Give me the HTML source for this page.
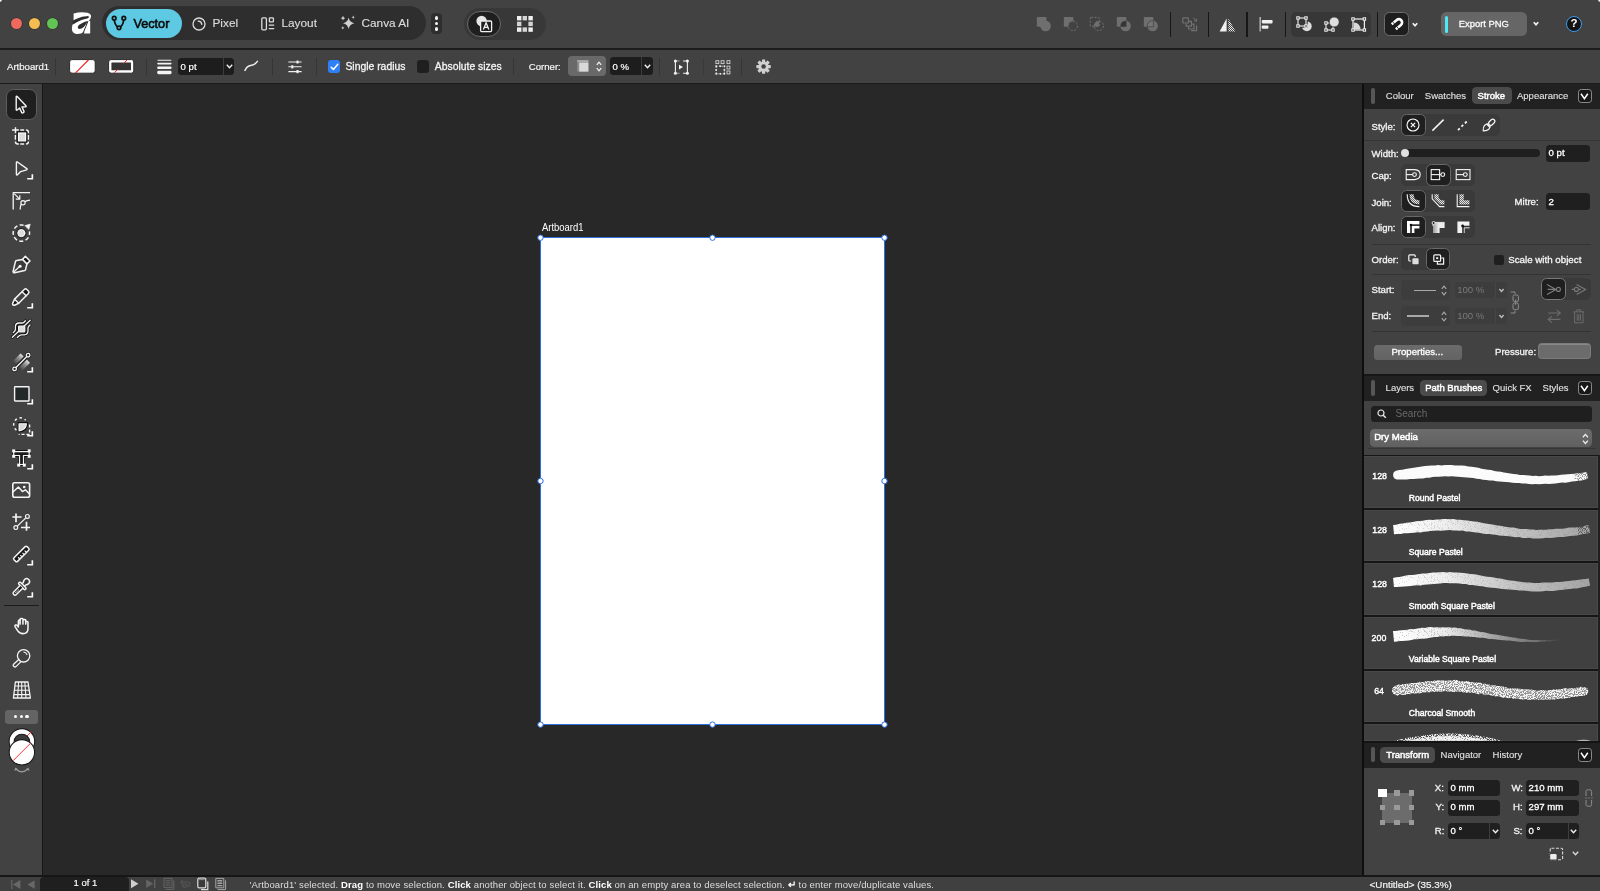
<!DOCTYPE html>
<html><head><meta charset="utf-8">
<style>
*{box-sizing:border-box;margin:0;padding:0}
html,body{width:1600px;height:891px;overflow:hidden;background:#282828}
body{font-family:"Liberation Sans",sans-serif;font-size:9.5px;color:#f2f2f2;position:relative;-webkit-font-smoothing:antialiased}
.abs{position:absolute}
#titlebar{position:absolute;left:0;top:0;width:1600px;height:49px;background:#424242}
#tbline{position:absolute;left:0;top:48px;width:1600px;height:2px;background:#1d1d1d}
#ctx{position:absolute;left:0;top:50px;width:1600px;height:33px;background:#424242}
#ctxline{position:absolute;left:0;top:83px;width:1600px;height:1px;background:#1b1b1b}
#tools{position:absolute;left:0;top:84px;width:42px;height:791px;background:#424242}
#toolsline{position:absolute;left:42px;top:84px;width:1px;height:791px;background:#161616}
#right{position:absolute;left:1364px;top:84px;width:236px;height:793px;background:#424242}
#rightline{position:absolute;left:1362.4px;top:84px;width:1.6px;height:807px;background:#0e0e0e}
#status{position:absolute;left:0;top:876.5px;width:1600px;height:14.5px;background:#404040}
#statusline{position:absolute;left:0;top:875px;width:1600px;height:1.5px;background:#161616}
.t{position:absolute;white-space:nowrap;line-height:1}
svg{position:absolute;overflow:visible}
#wrap{position:absolute;left:0;top:0;width:1600px;height:891px;will-change:transform}
</style></head><body><div id="wrap">
<div id="titlebar"></div><div id="tbline"></div>
<div id="ctx"></div><div id="ctxline"></div>
<div id="tools"></div><div id="toolsline"></div>
<div id="right"></div><div id="rightline"></div>
<div id="status"></div><div id="statusline"></div>
<!--TITLEBAR-->
<div class="abs" style="left:0;top:0;width:3px;height:3px;background:radial-gradient(circle at 0 0,#fff 0,#fff 1px,rgba(255,255,255,0) 2.4px)"></div><div class="abs" style="left:1597px;top:0;width:3px;height:3px;background:radial-gradient(circle at 100% 0,#fff 0,#fff 1px,rgba(255,255,255,0) 2.4px)"></div>
<!-- traffic lights -->
<div class="abs" style="left:11.4px;top:17.6px;width:11px;height:11px;border-radius:50%;background:#ee6a5e;box-shadow:0 0 0 .6px #2c2c2c"></div>
<div class="abs" style="left:29.2px;top:17.6px;width:11px;height:11px;border-radius:50%;background:#f5bd4f;box-shadow:0 0 0 .6px #2c2c2c"></div>
<div class="abs" style="left:47px;top:17.6px;width:11px;height:11px;border-radius:50%;background:#61c454;box-shadow:0 0 0 .6px #2c2c2c"></div>
<!-- logo -->
<svg style="left:66px;top:6px" width="32" height="34" viewBox="0 0 32 34"><path d="M7.6 7.5 Q15 5.4 21.5 6.8 Q25.6 8 25 11 Q24.6 13 22.8 14.9 L24.2 14.9 L24.2 27.5 L17.9 27.5 L18.5 25.5 Q14.5 28.5 10.4 28 Q5.4 27 5.9 21.4 Q6.6 16.6 10 14.4 L7.6 14.6 Z" fill="#fff"/><path d="M6.4 15.4 Q8 13.8 10 12.9 Q16 10.1 22.4 9.9 Q23.6 11 22 12.3 Q15 13.7 10.2 16.4 Q8.6 17.4 7.4 18.4 Z" fill="#2e2e2e"/><path d="M21.9 14.9 Q15.6 16.3 12.3 19.8 Q10.9 22.5 13.4 23 Q17.9 22.8 21.9 14.9 Z" fill="#2e2e2e"/><path d="M22 15.2 L17.2 26.9" stroke="#2e2e2e" stroke-width="1" fill="none"/></svg>
<!-- persona segment -->
<div class="abs" style="left:102px;top:6px;width:324px;height:34px;border-radius:17px;background:#2e2e2e"></div>
<div class="abs" style="left:105.5px;top:9px;width:76px;height:28.5px;border-radius:14.5px;background:#5ec9e2"></div>
<svg style="left:111px;top:15px" width="16" height="16" viewBox="0 0 16 16" fill="none" stroke="#111" stroke-width="1.7"><path d="M3.2 4.6 Q4 10.5 7.2 12.2 M12.8 4.6 Q12 10.5 8.8 12.2"/><circle cx="3.2" cy="3.2" r="1.8"/><circle cx="12.8" cy="3.2" r="1.8"/><circle cx="8" cy="12.8" r="1.8"/></svg>
<div class="t" style="left:133.4px;top:17.6px;font-size:12.7px;color:#0d0d0d;-webkit-text-stroke:.6px #0d0d0d">Vector</div>
<svg style="left:192px;top:16.5px" width="14" height="14" viewBox="0 0 14 14" fill="none" stroke="#dcdcdc" stroke-width="1.3"><circle cx="7" cy="7" r="6"/><path d="M6.2 4.2 Q9.4 4 9.8 7.4" stroke-linecap="round"/></svg>
<div class="t" style="left:212.5px;top:17.9px;font-size:11.8px;color:#dcdcdc;-webkit-text-stroke:.15px #dcdcdc">Pixel</div>
<svg style="left:261px;top:16.5px" width="14" height="14" viewBox="0 0 14 14" fill="none" stroke="#dcdcdc" stroke-width="1.3"><rect x=".8" y=".8" width="4.6" height="12" rx="1"/><rect x="8.4" y=".8" width="4" height="4" rx=".6"/><path d="M7.8 8.2 H13.2 M7.8 11.6 H13.2"/></svg>
<div class="t" style="left:281.5px;top:17.9px;font-size:11.8px;color:#dcdcdc;-webkit-text-stroke:.15px #dcdcdc">Layout</div>
<svg style="left:340px;top:15px" width="16" height="16" viewBox="0 0 16 16" fill="#cfcfcf"><path d="M8.6 2.6 Q9.4 7.2 14.4 8.2 Q9.4 9.2 8.6 14 Q7.8 9.2 3 8.2 Q7.8 7.2 8.6 2.6 Z"/><path d="M3 0.8 Q3.3 2.8 5.2 3.2 Q3.3 3.6 3 5.6 Q2.7 3.6 .8 3.2 Q2.7 2.8 3 .8 Z"/><path d="M13.2 .6 Q13.4 2 14.8 2.3 Q13.4 2.6 13.2 4 Q13 2.6 11.6 2.3 Q13 2 13.2 .6 Z"/><path d="M2.8 11.2 Q3 12.6 4.4 12.9 Q3 13.2 2.8 14.6 Q2.6 13.2 1.2 12.9 Q2.6 12.6 2.8 11.2 Z"/></svg>
<div class="t" style="left:361.5px;top:17.9px;font-size:11.8px;color:#dcdcdc;-webkit-text-stroke:.15px #dcdcdc">Canva AI</div>
<!-- more -->
<div class="abs" style="left:431px;top:13px;width:11px;height:20.5px;border-radius:4px;background:#2e2e2e"></div>
<div class="abs" style="left:434.7px;top:16px;width:3.8px;height:3.8px;border-radius:50%;background:#f4f4f4"></div>
<div class="abs" style="left:434.7px;top:21.5px;width:3.8px;height:3.8px;border-radius:50%;background:#f4f4f4"></div>
<div class="abs" style="left:434.7px;top:27px;width:3.8px;height:3.8px;border-radius:50%;background:#f4f4f4"></div>
<!-- view group -->
<div class="abs" style="left:464px;top:8px;width:82px;height:32px;border-radius:16px;background:#383838"></div>
<div class="abs" style="left:467px;top:11px;width:34px;height:26px;border-radius:13px;background:#1f1f1f;border:1px solid #6a6a6a"></div>
<svg style="left:475px;top:15px" width="18" height="18" viewBox="0 0 18 18"><circle cx="6.6" cy="6" r="5.2" fill="#e6e6e6"/><rect x="5.6" y="6" width="11" height="10.6" rx="1" fill="#1f1f1f" stroke="#f2f2f2" stroke-width="1.3"/><path d="M8.4 14.4 L11.1 7.8 L13.8 14.4 M9.3 12.4 H12.9" fill="none" stroke="#f2f2f2" stroke-width="1.3"/></svg>
<svg style="left:516.5px;top:15.5px" width="16" height="16" viewBox="0 0 16 16" fill="#f0f0f0"><rect x="0" y="0" width="4.4" height="4.4"/><rect x="5.6" y="0" width="4.4" height="4.4" opacity=".85"/><rect x="11.4" y="0" width="4.4" height="4.4"/><rect x="0" y="5.7" width="4.4" height="4.4" opacity=".85"/><rect x="11.4" y="5.7" width="4.4" height="4.4" opacity=".85"/><rect x="0" y="11.4" width="4.4" height="4.4"/><rect x="5.6" y="11.4" width="4.4" height="4.4" opacity=".85"/><rect x="11.4" y="11.4" width="4.4" height="4.4"/></svg>
<!-- boolean ops (disabled) -->
<svg style="left:1036px;top:16px" width="16" height="16" viewBox="0 0 16 16"><rect x=".8" y="1" width="9.6" height="9.8" rx=".8" fill="#6f6f6f"/><circle cx="9.6" cy="9.9" r="5.3" fill="#6f6f6f"/></svg>
<svg style="left:1062.6px;top:16px" width="16" height="16" viewBox="0 0 16 16"><rect x=".8" y="1" width="9.6" height="9.8" rx=".8" fill="#6f6f6f"/><circle cx="9.8" cy="9.9" r="4.7" fill="#424242" stroke="#6f6f6f" stroke-width="1" stroke-dasharray="2.2 1.4"/></svg>
<svg style="left:1089.4px;top:16px" width="16" height="16" viewBox="0 0 16 16"><rect x="1.2" y="1.4" width="9" height="9" rx=".6" fill="none" stroke="#6f6f6f" stroke-width="1" stroke-dasharray="2.2 1.4"/><circle cx="9.8" cy="9.9" r="4.7" fill="none" stroke="#6f6f6f" stroke-width="1" stroke-dasharray="2.2 1.4"/><path d="M10.2 5.2 A4.7 4.7 0 0 0 5.1 10.4 L10.2 10.4 Z" fill="#6f6f6f"/></svg>
<svg style="left:1116.2px;top:16px" width="16" height="16" viewBox="0 0 16 16"><rect x=".8" y="1" width="9.6" height="9.8" rx=".8" fill="#6f6f6f"/><circle cx="9.6" cy="9.9" r="5.3" fill="#6f6f6f"/><path d="M10.4 4.7 A5.3 5.3 0 0 0 4.4 10.8 L10.4 10.8 Z" fill="#363636"/></svg>
<svg style="left:1143px;top:16px" width="16" height="16" viewBox="0 0 16 16"><rect x=".8" y="1" width="9.6" height="9.8" rx=".8" fill="#6f6f6f"/><circle cx="9.6" cy="9.9" r="5.3" fill="#6f6f6f"/><path d="M10.4 4.7 A5.3 5.3 0 0 0 4.4 10.8 L10.4 10.8 Z" fill="#767676" stroke="#4a4a4a" stroke-width=".9"/></svg>
<div class="abs" style="left:1169.5px;top:11.5px;width:1.6px;height:25px;background:#161616"></div>
<!-- divide -->
<svg style="left:1181.5px;top:16.5px" width="16" height="15" viewBox="0 0 16 15" fill="none" stroke="#707070" stroke-width="1.2"><rect x=".8" y=".8" width="5.6" height="5.2" rx=".6"/><path d="M4.2 6.4 V9.2 H9.4 V4.4 H6.8"/><path d="M6.6 10 V12 H12 V7.2 H9.8"/><path d="M9 13.6 H14.6 V8.6"/><path d="M11 .8 L14.4 3.8 M14.6 1.6 V4 H12.2" stroke-width="1"/></svg>
<div class="abs" style="left:1207.7px;top:11.5px;width:1.6px;height:25px;background:#161616"></div>
<!-- flip -->
<svg style="left:1219px;top:17.5px" width="18" height="15" viewBox="0 0 18 15"><defs><pattern id="dots" width="2" height="2" patternUnits="userSpaceOnUse"><rect width="1" height="1" fill="#eee"/><rect x="1" y="1" width="1" height="1" fill="#eee"/></pattern></defs><path d="M7.6 .6 L7.6 13.6 L.6 13.6 Z" fill="#f0f0f0"/><path d="M9.4 .6 L9.4 13.6 L16.6 13.6 Z" fill="url(#dots)"/></svg>
<div class="abs" style="left:1246px;top:11.5px;width:1.6px;height:25px;background:#161616"></div>
<!-- align -->
<svg style="left:1259px;top:17px" width="15" height="15" viewBox="0 0 15 15"><rect x=".6" y="0" width="1.1" height="14.4" fill="#dcdcdc"/><rect x="2.8" y="3" width="10.8" height="3.4" rx=".8" fill="#f0f0f0"/><rect x="2.8" y="8.4" width="6.6" height="3.4" rx=".8" fill="#f0f0f0"/></svg>
<div class="abs" style="left:1284.7px;top:11.5px;width:1.6px;height:25px;background:#161616"></div>
<!-- group -->
<div class="abs" style="left:1291px;top:12px;width:80px;height:24.5px;border-radius:5px;background:#373737"></div>
<svg style="left:1296px;top:16px" width="18" height="16" viewBox="0 0 18 16"><circle cx="10.8" cy="10.3" r="4.9" fill="#dedede"/><rect x="2" y="2" width="8" height="8" fill="#373737" stroke="#373737" stroke-width="3.4"/><rect x="2" y="2" width="8" height="8" fill="none" stroke="#f2f2f2" stroke-width="1.1"/><g fill="#373737" stroke="#f2f2f2" stroke-width="1"><rect x=".8" y=".8" width="2.4" height="2.4"/><rect x="8.8" y=".8" width="2.4" height="2.4"/><rect x=".8" y="8.8" width="2.4" height="2.4"/><rect x="8.8" y="8.8" width="2.4" height="2.4"/></g></svg>
<svg style="left:1323.5px;top:16px" width="18" height="16" viewBox="0 0 18 16"><rect x="2" y="7" width="7" height="7" fill="none" stroke="#f2f2f2" stroke-width="1.1"/><circle cx="10.2" cy="6" r="5" fill="#dedede" stroke="#373737" stroke-width=".8"/><g fill="#373737" stroke="#f2f2f2" stroke-width="1"><rect x=".8" y="5.8" width="2.4" height="2.4"/><rect x=".8" y="12.8" width="2.4" height="2.4"/><rect x="7.8" y="12.8" width="2.4" height="2.4"/></g></svg>
<svg style="left:1351px;top:17px" width="16" height="15" viewBox="0 0 16 15"><rect x="2" y="2" width="11.4" height="11" fill="none" stroke="#f2f2f2" stroke-width="1.2"/><path d="M3 12.4 L3 5.4 Q9 5.8 9.6 12.4 Z" fill="#d8d8d8"/><g fill="#373737" stroke="#f2f2f2" stroke-width="1"><rect x=".8" y=".8" width="2.4" height="2.4"/><rect x="12.2" y=".8" width="2.4" height="2.4"/><rect x=".8" y="11.8" width="2.4" height="2.4"/><rect x="12.2" y="11.8" width="2.4" height="2.4"/></g></svg>
<div class="abs" style="left:1376.7px;top:11.5px;width:1.6px;height:25px;background:#161616"></div>
<!-- magnet -->
<div class="abs" style="left:1383.5px;top:12px;width:25.5px;height:24px;border-radius:5.5px;background:#1e1e1e;border:1.2px solid #6c6c6c"></div>
<svg style="left:1383px;top:12px" width="27" height="25" viewBox="0 0 27 25" fill="none"><g transform="translate(15.85 10.4) rotate(50)"><path d="M-3.25 6.6 V0 A3.25 3.25 0 0 1 3.25 0 V6.6" stroke="#fff" stroke-width="2.6"/><path d="M-5 4.3 H-1.5 M1.5 4.3 H5" stroke="#1e1e1e" stroke-width=".8"/></g></svg>
<svg style="left:1411.2px;top:21.6px" width="8" height="6" viewBox="0 0 8 6" fill="none" stroke="#f4f4f4" stroke-width="1.7"><path d="M1.8 1.2 L4 3.8 L6.2 1.2"/></svg>
<!-- export -->
<div class="abs" style="left:1441px;top:12px;width:86px;height:24px;border-radius:5.5px;background:#666"></div>
<div class="abs" style="left:1444.5px;top:15.5px;width:3.5px;height:17px;border-radius:2px;background:#4ee8f6"></div>
<div class="t" style="left:1458.8px;top:19.3px;font-size:9.4px;color:#fafafa;-webkit-text-stroke:.3px #fafafa">Export PNG</div>
<svg style="left:1531.6px;top:21.4px" width="8" height="6" viewBox="0 0 8 6" fill="none" stroke="#f4f4f4" stroke-width="1.7"><path d="M1.8 1.2 L4 3.8 L6.2 1.2"/></svg>
<!-- help -->
<div class="abs" style="left:1566px;top:16px;width:16.4px;height:16.4px;border-radius:50%;background:#141414;border:1.4px solid #3c9cf5"></div>
<div class="t" style="left:1570.6px;top:18.4px;font-size:11.5px;font-weight:bold;color:#fff">?</div>
<!--/TITLEBAR-->
<!--CTX-->
<div class="t" style="left:7px;top:61.8px;font-size:9.6px;color:#f4f4f4;-webkit-text-stroke:.2px #f4f4f4">Artboard1</div>
<div class="abs" style="left:55px;top:58px;width:1px;height:17px;background:#353535"></div>
<!-- fill swatch -->
<svg style="left:68.5px;top:58.5px" width="27" height="15" viewBox="0 0 27 15"><rect x=".6" y=".6" width="25.6" height="13.6" rx="2.4" fill="#fff" stroke="#2a2a2a" stroke-width="1"/><path d="M6.6 13.8 L19.4 1" stroke="#f21d1d" stroke-width="1.1"/></svg>
<!-- stroke swatch -->
<svg style="left:108px;top:58.5px" width="27" height="15" viewBox="0 0 27 15"><rect x=".6" y=".6" width="25.2" height="13.6" rx="2.4" fill="#fff" stroke="#2a2a2a" stroke-width="1"/><rect x="3.4" y="3.5" width="19.6" height="7.8" rx=".6" fill="#353535"/><path d="M6.4 13.8 L19 1" stroke="#f21d1d" stroke-width="1"/><rect x="4.6" y="4.6" width="17.2" height="5.6" fill="#353535"/></svg>
<div class="abs" style="left:145.5px;top:58px;width:1px;height:17px;background:#353535"></div>
<!-- line weight -->
<svg style="left:157px;top:59px" width="15" height="16" viewBox="0 0 15 16" fill="#f4f4f4"><rect x=".4" y=".8" width="14" height=".9" rx=".4"/><rect x=".2" y="3.7" width="14.4" height="1.7" rx=".8"/><rect x=".2" y="7.4" width="14.4" height="2.5" rx="1.2"/><rect x=".2" y="11.8" width="14.4" height="3.4" rx="1.4"/></svg>
<div class="abs" style="left:178px;top:58px;width:56px;height:17.4px;border-radius:3.5px;background:#1d1d1d"></div>
<div class="abs" style="left:223.2px;top:58px;width:1px;height:17.4px;background:#3d3d3d"></div>
<div class="t" style="left:180.6px;top:62px;font-size:9.6px;color:#fff;-webkit-text-stroke:.2px #fff">0 pt</div>
<svg style="left:225.6px;top:64.2px" width="7" height="5" viewBox="0 0 7 5" fill="none" stroke="#f0f0f0" stroke-width="1.4"><path d="M.8 .8 L3.5 3.8 L6.2 .8"/></svg>
<svg style="left:244px;top:60px" width="15" height="12" viewBox="0 0 15 12" fill="none" stroke="#f0f0f0" stroke-width="1.5" stroke-linecap="round"><path d="M1 10.4 Q3.2 6 6.6 5.6 Q10.6 5.2 13.4 1.4"/></svg>
<div class="abs" style="left:272px;top:58px;width:1px;height:17px;background:#353535"></div>
<!-- sliders -->
<svg style="left:287.5px;top:59.5px" width="14" height="14" viewBox="0 0 14 14" stroke="#f0f0f0" stroke-width="1.1" fill="#f0f0f0"><path d="M.4 2 H13.6 M.4 6.8 H13.6 M.4 11.6 H13.6"/><rect x="8.4" y=".4" width="2.2" height="3.2" rx=".6" stroke="none"/><rect x="3.2" y="5.2" width="2.2" height="3.2" rx=".6" stroke="none"/><rect x="8.4" y="10" width="2.2" height="3.2" rx=".6" stroke="none"/></svg>
<div class="abs" style="left:316.2px;top:58px;width:1px;height:17px;background:#353535"></div>
<!-- checkboxes -->
<div class="abs" style="left:327.6px;top:60px;width:12.8px;height:12.8px;border-radius:3px;background:#2f80f7"></div>
<svg style="left:329.6px;top:62.6px" width="9" height="8" viewBox="0 0 9 8" fill="none" stroke="#fff" stroke-width="1.5" stroke-linecap="round" stroke-linejoin="round"><path d="M1.2 4.2 L3.4 6.4 L7.8 1.2"/></svg>
<div class="t" style="left:345.4px;top:61.5px;font-size:10.4px;color:#f4f4f4;-webkit-text-stroke:.3px #f4f4f4">Single radius</div>
<div class="abs" style="left:417px;top:60.2px;width:12.4px;height:12.4px;border-radius:3px;background:#1f1f1f"></div>
<div class="t" style="left:434.8px;top:61.5px;font-size:10.4px;color:#f4f4f4;-webkit-text-stroke:.3px #f4f4f4">Absolute sizes</div>
<div class="abs" style="left:513px;top:58px;width:1px;height:17px;background:#353535"></div>
<div class="t" style="left:528.8px;top:62px;font-size:9.6px;color:#f4f4f4;-webkit-text-stroke:.2px #f4f4f4">Corner:</div>
<div class="abs" style="left:568px;top:56.2px;width:38px;height:20px;border-radius:4px;background:#696969"></div>
<svg style="left:576.5px;top:60px" width="12" height="12" viewBox="0 0 12 12"><rect x=".2" y=".4" width="11.2" height="11.2" fill="#8c8c8c"/><rect x="2.2" y="2.6" width="9.2" height="9" fill="#d9d9d9"/><path d="M.2 1 H11.4" stroke="#cfcfcf" stroke-width="1"/></svg>
<svg style="left:595.6px;top:60.6px" width="6" height="11" viewBox="0 0 6 11" fill="none" stroke="#f0f0f0" stroke-width="1.3"><path d="M.8 3.8 L3 1.2 L5.2 3.8 M.8 7.2 L3 9.8 L5.2 7.2"/></svg>
<div class="abs" style="left:610px;top:57.4px;width:43.4px;height:18px;border-radius:3.5px;background:#1d1d1d"></div>
<div class="abs" style="left:641.2px;top:57.4px;width:1px;height:18px;background:#3d3d3d"></div>
<div class="t" style="left:612.6px;top:62px;font-size:9.6px;color:#fff;-webkit-text-stroke:.2px #fff">0 %</div>
<svg style="left:644.4px;top:64.2px" width="7" height="5" viewBox="0 0 7 5" fill="none" stroke="#f0f0f0" stroke-width="1.4"><path d="M.8 .8 L3.5 3.8 L6.2 .8"/></svg>
<div class="abs" style="left:659px;top:58px;width:1px;height:17px;background:#353535"></div>
<!-- icon 1 -->
<svg style="left:673px;top:59px" width="17" height="16" viewBox="0 0 17 16" fill="none" stroke="#f0f0f0" stroke-width="1.1"><path d="M2.4 2 V14 M14.4 2 V14"/><path d="M10 2 H14.4 M10 14.2 H14.4"/><path d="M2.4 2 H6.6 M2.4 14.2 H6.6" stroke="#a0a0a0"/><g fill="#f4f4f4" stroke="none"><circle cx="2.4" cy="1.9" r="1.5"/><circle cx="2.4" cy="14.2" r="1.5"/><circle cx="14.4" cy="1.9" r="1.5"/><circle cx="14.4" cy="14.2" r="1.5"/><path d="M6 5.8 L10 8.1 L6 10.4 Z"/></g></svg>
<div class="abs" style="left:703.4px;top:58px;width:1px;height:17px;background:#393939"></div>
<!-- icon 2 -->
<svg style="left:714.5px;top:59.5px" width="16" height="15" viewBox="0 0 16 15" fill="none" stroke="#d4d4d4" stroke-width=".9"><rect x=".9" y=".7" width="2.9" height="2.9"/><rect x="6.1" y=".7" width="2.9" height="2.9"/><rect x="12" y=".7" width="2.9" height="2.9"/><rect x="12" y="6.1" width="2.9" height="2.9"/><rect x="12" y="11" width="2.9" height="2.9"/><rect x="1.2" y="6.2" width="8.2" height="7.6" stroke-dasharray="1.4 1.3"/><g fill="#f0f0f0" stroke="none"><rect x=".4" y="5.4" width="1.6" height="1.6"/><rect x="8.6" y="5.4" width="1.6" height="1.6"/><rect x=".4" y="13" width="1.6" height="1.6"/><rect x="8.6" y="13" width="1.6" height="1.6"/><rect x="4.5" y="5.4" width="1.6" height="1.6"/><rect x="4.5" y="13" width="1.6" height="1.6"/><rect x=".4" y="9.2" width="1.6" height="1.6"/><rect x="8.6" y="9.2" width="1.6" height="1.6"/></g></svg>
<div class="abs" style="left:741px;top:58px;width:1px;height:17px;background:#353535"></div>
<!-- gear -->
<svg style="left:755.6px;top:58.5px" width="15.2" height="15.2" viewBox="-8 -8 16 16"><g fill="#d0d0d0"><circle r="5.4"/><rect x="-1.7" y="-7.6" width="3.4" height="3.6" rx=".5" transform="rotate(0)"/><rect x="-1.7" y="-7.6" width="3.4" height="3.6" rx=".5" transform="rotate(45)"/><rect x="-1.7" y="-7.6" width="3.4" height="3.6" rx=".5" transform="rotate(90)"/><rect x="-1.7" y="-7.6" width="3.4" height="3.6" rx=".5" transform="rotate(135)"/><rect x="-1.7" y="-7.6" width="3.4" height="3.6" rx=".5" transform="rotate(180)"/><rect x="-1.7" y="-7.6" width="3.4" height="3.6" rx=".5" transform="rotate(225)"/><rect x="-1.7" y="-7.6" width="3.4" height="3.6" rx=".5" transform="rotate(270)"/><rect x="-1.7" y="-7.6" width="3.4" height="3.6" rx=".5" transform="rotate(315)"/></g><circle r="2.4" fill="#424242"/></svg>
<!--/CTX-->
<!--TOOLS-->
<div class="abs" style="left:6px;top:89.3px;width:31px;height:30.4px;border-radius:7.5px;background:#1f1f1f;border:1px solid #5e5e5e"></div>
<svg style="left:11px;top:94.5px" width="20" height="20" viewBox="0 0 20 20" fill="none" stroke="#f4f4f4" stroke-width="1.3" stroke-linejoin="round" stroke-linecap="round"><path d="M5.2 1.8 L5.2 14.6 Q5.4 15.6 6.3 15 L8.6 13 L10.6 17.4 Q11 18.2 11.8 17.9 L12.6 17.5 Q13.3 17.1 13 16.4 L11 12 L14.6 11.8 Q15.6 11.6 14.9 10.8 L6.2 1.5 Q5.3 .8 5.2 1.8 Z" stroke-width="1.4"/></svg>
<svg style="left:11px;top:126.0px" width="20" height="20" viewBox="0 0 20 20" fill="none" stroke="#f4f4f4" stroke-width="1.3" stroke-linejoin="round" stroke-linecap="round"><path d="M9.3 4 H13.1 M15.1 4 Q17.4 4 17.4 6.4 V7.2 M17.4 9 V13.7 M17.4 15.5 Q17.4 18 15.1 18 M13.1 18 H9.3 M7.8 18 H6.8 Q4.4 18 4.4 15.5 M4.4 13.7 V9" stroke-linecap="butt" stroke-width="1.4"/><rect x="6.9" y="6.4" width="8.3" height="9.1" fill="#111" stroke="#111" stroke-width="2.2"/><rect x="7.5" y="7" width="7.1" height="7.9" fill="#dcdcdc" stroke="#fafafa" stroke-width="1.2" stroke-linejoin="miter"/><path d="M1.1 4 H7.9 M4.5 1.2 V7.3" stroke-linecap="butt" stroke-width="1.4"/></svg>
<svg style="left:27px;top:174.20px" width="7" height="6" viewBox="0 0 7 6" fill="none" stroke="#fcfcfc" stroke-width="1.65"><path d="M5.35 .2 V4.75 H.2"/></svg>
<svg style="left:11px;top:159.3px" width="20" height="20" viewBox="0 0 20 20" fill="none" stroke="#f4f4f4" stroke-width="1.3" stroke-linejoin="round" stroke-linecap="round"><path d="M5.4 3.6 L5.4 15.4 Q5.6 16.5 6.5 15.8 L9.6 12.6 L15.6 10.8 Q16.8 10.3 15.8 9.6 L6.4 3 Q5.4 2.5 5.4 3.6 Z" stroke-width="1.4"/></svg>
<svg style="left:11px;top:190.9px" width="20" height="20" viewBox="0 0 20 20" fill="none" stroke="#f4f4f4" stroke-width="1.3" stroke-linejoin="round" stroke-linecap="round"><path d="M2.2 18.4 V1.6 H19" stroke-linecap="butt" stroke-width="1.3"/><path d="M3.2 2.6 L8.4 7.8 M8.8 4.2 V8.2 H4.8" stroke-width="1.2" stroke-linecap="butt"/><circle cx="12" cy="11.8" r="2.1" stroke-width="1.2"/><path d="M14 10.6 Q16 9.4 19 9.2 M10.2 13 Q9.2 15.4 9.2 18.6" stroke-width="1.3" stroke-linecap="butt"/></svg>
<svg style="left:11px;top:222.9px" width="20" height="20" viewBox="0 0 20 20" fill="none" stroke="#f4f4f4" stroke-width="1.3" stroke-linejoin="round" stroke-linecap="round"><circle cx="10.36" cy="10.1" r="3.9" fill="#222" stroke="#222" stroke-width="2.4"/><circle cx="10.36" cy="10.1" r="8.2" stroke-dasharray="4 2.44" stroke-dashoffset="2" stroke-linecap="butt" stroke-width="1.5"/><circle cx="16.3" cy="4.2" r="2.9" fill="#424242" stroke="none"/><circle cx="10.36" cy="10.1" r="3.6" fill="#dcdcdc" stroke="#fafafa" stroke-width="1"/><path d="M14 2.5 L19.3 1.1 L17.9 6.3 Z" fill="#fafafa" stroke="#fafafa" stroke-width=".5"/></svg>
<svg style="left:11px;top:255.1px" width="20" height="20" viewBox="0 0 20 20" fill="none" stroke="#f4f4f4" stroke-width="1.3" stroke-linejoin="round" stroke-linecap="round"><path d="M11.5 4.4 L14.3 1.3 L19 6 L15.9 8.9 Z" fill="#151515" stroke-width="1.5"/><path d="M2.6 17.2 Q1.8 17.4 2.2 16 L4.5 6.4 Q4.7 5.6 5.6 5.5 L11.5 4.4 L15.9 8.9 L14.6 14.6 Q14.4 15.4 13.6 15.6 L3.6 17.8 Q2.4 18 2.6 17.2 Z" fill="#3a3a3a" stroke-width="1.5"/><path d="M2.8 17 L8.6 11.6" stroke-width="1.3"/><circle cx="9.1" cy="11.2" r="1.5" fill="#fafafa" stroke="none"/></svg>
<svg style="left:27px;top:302.80px" width="7" height="6" viewBox="0 0 7 6" fill="none" stroke="#fcfcfc" stroke-width="1.65"><path d="M5.35 .2 V4.75 H.2"/></svg>
<svg style="left:11px;top:287.0px" width="20" height="20" viewBox="0 0 20 20" fill="none" stroke="#f4f4f4" stroke-width="1.3" stroke-linejoin="round" stroke-linecap="round"><g transform="translate(9.2 10.65) rotate(-45)"><path d="M5.6 -2.9 H8.7 Q10.5 -2.9 10.5 -1.1 V1.1 Q10.5 2.9 8.7 2.9 H5.6 Z" fill="#151515" stroke="none"/><path d="M-5 -2.9 L-9.4 -1.3 Q-11 0 -9.4 1.3 L-5 2.9 Z" fill="#151515" stroke="none"/><path d="M-5 -2.9 H8.7 Q10.5 -2.9 10.5 -1.1 V1.1 Q10.5 2.9 8.7 2.9 H-5 L-9.4 1.3 Q-11 0 -9.4 -1.3 Z" stroke-width="1.5"/><path d="M5.6 -2.9 V2.9 M-5 -2.9 V2.9" stroke-width="1.4"/></g></svg>
<svg style="left:11px;top:319.4px" width="20" height="20" viewBox="0 0 20 20" fill="none" stroke="#f4f4f4" stroke-width="1.3" stroke-linejoin="round" stroke-linecap="round"><path d="M2.2 13.6 L3.6 12.2 Q4.4 11.4 4.4 10 L4.4 7.4 Q4.6 4.2 8 4 L11 4 Q12.2 4 13 3.2 L14.4 1.8 M19 6 L17.8 7.2 Q17 8 17 9.4 L17 12 Q16.8 15.6 13.4 15.8 L10.6 15.8 Q9.4 15.8 8.6 16.6 L6.3 18.6" stroke="#111" stroke-width="2.8"/><path d="M1.4 18.3 L19.2 1.2" stroke="#111" stroke-width="2.8"/><rect x="7.4" y="6.8" width="6.6" height="6.4" rx="1" fill="#111" stroke="#111" stroke-width="2.6"/><path d="M2.2 13.6 L3.6 12.2 Q4.4 11.4 4.4 10 L4.4 7.4 Q4.6 4.2 8 4 L11 4 Q12.2 4 13 3.2 L14.4 1.8 M19 6 L17.8 7.2 Q17 8 17 9.4 L17 12 Q16.8 15.6 13.4 15.8 L10.6 15.8 Q9.4 15.8 8.6 16.6 L6.3 18.6" stroke-width="1.3"/><path d="M1.4 18.3 L19.2 1.2" stroke-width="1.3"/><rect x="7.6" y="7" width="6.2" height="6" rx=".8" fill="#dcdcdc" stroke-width="1.2"/></svg>
<svg style="left:27px;top:367.10px" width="7" height="6" viewBox="0 0 7 6" fill="none" stroke="#fcfcfc" stroke-width="1.65"><path d="M5.35 .2 V4.75 H.2"/></svg>
<svg style="left:11px;top:351.5px" width="20" height="20" viewBox="0 0 20 20" fill="none" stroke="#f4f4f4" stroke-width="1.3" stroke-linejoin="round" stroke-linecap="round"><defs><linearGradient id="gg" x1="0" y1="0" x2="1" y2="0"><stop offset="0" stop-color="#4c4c4c"/><stop offset=".55" stop-color="#8e8e8e"/><stop offset="1" stop-color="#e2e2e2"/></linearGradient></defs><g stroke="none"><rect x="-5.3" y="-2.2" width="10.6" height="4.4" rx=".5" fill="url(#gg)" transform="translate(7.4 6.7) rotate(-45)"/><rect x="-5.3" y="-2.2" width="10.6" height="4.4" rx=".5" fill="url(#gg)" transform="translate(13.65 13) rotate(-45)"/></g><path d="M3.6 16.9 L17.1 3.2" stroke="#1a1a1a" stroke-width="3.2"/><circle cx="3.6" cy="16.9" r="2" fill="#1a1a1a" stroke="#1a1a1a" stroke-width="2"/><circle cx="17.1" cy="3.2" r="2" fill="#1a1a1a" stroke="#1a1a1a" stroke-width="2"/><path d="M5 15.4 L15.6 4.7" stroke-width="1.4"/><circle cx="3.6" cy="16.9" r="1.8" fill="#1e1e1e" stroke-width="1.3"/><circle cx="17.1" cy="3.2" r="1.8" fill="#1e1e1e" stroke-width="1.3"/></svg>
<svg style="left:27px;top:399.25px" width="7" height="6" viewBox="0 0 7 6" fill="none" stroke="#fcfcfc" stroke-width="1.65"><path d="M5.35 .2 V4.75 H.2"/></svg>
<svg style="left:11px;top:383.5px" width="20" height="20" viewBox="0 0 20 20" fill="none" stroke="#f4f4f4" stroke-width="1.3" stroke-linejoin="round" stroke-linecap="round"><rect x="3.6" y="2.8" width="14.4" height="14.2" rx=".6" fill="#232929" stroke-width="1.4" stroke-linejoin="miter"/></svg>
<svg style="left:27px;top:431.40px" width="7" height="6" viewBox="0 0 7 6" fill="none" stroke="#fcfcfc" stroke-width="1.65"><path d="M5.35 .2 V4.75 H.2"/></svg>
<svg style="left:11px;top:415.7px" width="20" height="20" viewBox="0 0 20 20" fill="none" stroke="#f4f4f4" stroke-width="1.3" stroke-linejoin="round" stroke-linecap="round"><path d="M14.6 4.2 A6.8 6.8 0 1 0 7 15" stroke-dasharray="2.4 2.9" stroke-dashoffset="1" stroke-linecap="butt" stroke-width="1.5"/><path d="M18.6 7.4 V18.4 H7.6" stroke-dasharray="3.2 1.8" stroke-dashoffset="-1" stroke-linecap="butt" stroke-linejoin="miter" stroke-width="1.4"/><path d="M7.8 7.4 H15.9 Q15.6 14.6 7.8 15.2 Z" fill="#111" stroke="#111" stroke-width="2.6"/><path d="M8 7.8 H15.5 Q15 14.2 8 14.9 Z" fill="#d8d8d8" stroke-width="1.1"/></svg>
<svg style="left:27px;top:463.55px" width="7" height="6" viewBox="0 0 7 6" fill="none" stroke="#fcfcfc" stroke-width="1.65"><path d="M5.35 .2 V4.75 H.2"/></svg>
<svg style="left:11px;top:448.0px" width="20" height="20" viewBox="0 0 20 20" fill="none" stroke="#f4f4f4" stroke-width="1.3" stroke-linejoin="round" stroke-linecap="round"><path d="M2.7 3.6 H18.2 V7.5 H12.5 V16.5 H8.5 V7.5 H2.7 Z" stroke="#111" stroke-width="3" stroke-linejoin="miter"/><path d="M2.7 3.6 H18.2 V7.5 H12.5 V16.5 H8.5 V7.5 H2.7 Z" fill="#1c1c1c" stroke-width="1.2" stroke-linejoin="miter"/><g fill="#fafafa" stroke="none"><rect x="1.2" y="1.4" width="3" height="3"/><rect x="16.7" y="1.4" width="3" height="3"/><rect x="1.2" y="6.8" width="3" height="3"/><rect x="16.7" y="6.8" width="3" height="3"/><rect x="6.2" y="15.6" width="3" height="3"/><rect x="11.8" y="15.6" width="3" height="3"/></g></svg>
<svg style="left:11px;top:480.0px" width="20" height="20" viewBox="0 0 20 20" fill="none" stroke="#f4f4f4" stroke-width="1.3" stroke-linejoin="round" stroke-linecap="round"><rect x="1.8" y="2.8" width="16.8" height="14.4" rx="1.8" stroke-width="1.6"/><path d="M2.2 11.8 L7.4 7 L11.4 11.6 L14.4 9.8 L18.4 14" stroke-width="1.45"/><circle cx="13.2" cy="7" r="1.3" fill="#f4f4f4" stroke="none"/></svg>
<svg style="left:11px;top:512.2px" width="20" height="20" viewBox="0 0 20 20" fill="none" stroke="#f4f4f4" stroke-width="1.3" stroke-linejoin="round" stroke-linecap="round"><path d="M1.4 5 H10.6 M5 1.4 V10.2 M10 15.5 H19 M15.5 9.8 V18.8" stroke-width="1.7" stroke-linecap="butt"/><path d="M6 14.4 L15.2 5.6" stroke-width="1.3"/><circle cx="4.8" cy="15.6" r="1.9" fill="#424242" stroke-width="1.2"/><circle cx="16.4" cy="4.4" r="1.9" fill="#424242" stroke-width="1.2"/></svg>
<svg style="left:27px;top:560.00px" width="7" height="6" viewBox="0 0 7 6" fill="none" stroke="#fcfcfc" stroke-width="1.65"><path d="M5.35 .2 V4.75 H.2"/></svg>
<svg style="left:11px;top:544.3px" width="20" height="20" viewBox="0 0 20 20" fill="none" stroke="#f4f4f4" stroke-width="1.3" stroke-linejoin="round" stroke-linecap="round"><g transform="translate(10.35 10) rotate(-45)"><rect x="-9.2" y="-2.5" width="18.4" height="5" rx="1.3" fill="#161616" stroke-width="1.5"/><path d="M-4.6 2.5 V0 M-1.5 2.5 V0 M1.6 2.5 V0 M4.7 2.5 V0" stroke-width="1.2" stroke-linecap="butt"/></g></svg>
<svg style="left:27px;top:592.15px" width="7" height="6" viewBox="0 0 7 6" fill="none" stroke="#fcfcfc" stroke-width="1.65"><path d="M5.35 .2 V4.75 H.2"/></svg>
<svg style="left:11px;top:576.5px" width="20" height="20" viewBox="0 0 20 20" fill="none" stroke="#f4f4f4" stroke-width="1.3" stroke-linejoin="round" stroke-linecap="round"><g transform="translate(10.15 10.1) rotate(45)"><path d="M-1.7 -2.6 V-4.8 Q-2.9 -6 -2.9 -7.8 Q-2.9 -10.6 0 -10.6 Q2.9 -10.6 2.9 -7.8 Q2.9 -6 1.7 -4.8 V-2.6" fill="#3a3a3a" stroke-width="1.45"/><rect x="-4.7" y="-2.9" width="9.4" height="2.5" rx="1.25" fill="#424242" stroke-width="1.45"/><path d="M-1.9 -.4 V8.7 Q-1.9 10.6 0 10.6 Q1.9 10.6 1.9 8.7 V-.4" fill="#1c1c1c" stroke-width="1.45"/><path d="M0 3.6 V8.8" stroke-width="1.1" stroke-dasharray="1 .7" stroke-linecap="butt"/></g></svg>
<svg style="left:11px;top:615.7px" width="20" height="20" viewBox="0 0 20 20" fill="none" stroke="#f4f4f4" stroke-width="1.3" stroke-linejoin="round" stroke-linecap="round"><path d="M7.4 11 V4.9 Q7.4 4.2 8.25 4.2 Q9.1 4.2 9.1 4.9 V3.2 Q9.1 2.5 10.5 2.5 Q11.95 2.5 11.95 3.2 V4.3 Q11.95 3.6 13.35 3.6 Q14.75 3.6 14.75 4.3 V6.2 Q14.75 5.5 15.9 5.5 Q17 5.5 17 6.3 V12.4 Q17 17.6 11.8 17.6 Q8.6 17.6 6.6 14.6 L4.2 10.8 Q3.5 9.5 4.6 9 Q5.6 8.7 6.4 9.6 L7.4 11 M9.1 4.9 V8.1 M11.95 3.4 V8.1 M14.75 4.6 V8.1" stroke-width="1.55"/></svg>
<svg style="left:11px;top:647.8px" width="20" height="20" viewBox="0 0 20 20" fill="none" stroke="#f4f4f4" stroke-width="1.3" stroke-linejoin="round" stroke-linecap="round"><circle cx="12.6" cy="7.8" r="6.2" stroke-width="1.3"/><path d="M8 11.2 L2.6 16.2 Q1.6 17.2 2.6 18.2 L3 18.6 Q4 19.4 5 18.6 L10 13.6" stroke-width="1.3"/><path d="M12.8 4 Q15.2 4.4 16 6.6" stroke-width="1.1"/></svg>
<svg style="left:11px;top:679.7px" width="20" height="20" viewBox="0 0 20 20" fill="none" stroke="#f4f4f4" stroke-width="1.3" stroke-linejoin="round" stroke-linecap="round"><path d="M4.4 2 H17 L19.4 18 H2.4 Z" stroke-width="1.3"/><path d="M7.6 2 L6.6 18 M10.7 2 V18 M13.8 2 L15 18 M4 6 H17.6 M3.4 10.2 H18.2 M2.8 14.6 H18.8" stroke-width="1.1" stroke-linecap="butt"/></svg>
<div class="abs" style="left:4px;top:605px;width:35px;height:1.2px;background:#1b1b1b"></div>
<div class="abs" style="left:5px;top:709.6px;width:33px;height:14px;border-radius:3px;background:#646464"></div>
<div class="abs" style="left:14px;top:714.8px;width:3.4px;height:3.4px;border-radius:50%;background:#fafafa"></div>
<div class="abs" style="left:19.8px;top:714.8px;width:3.4px;height:3.4px;border-radius:50%;background:#fafafa"></div>
<div class="abs" style="left:25.4px;top:714.8px;width:3.4px;height:3.4px;border-radius:50%;background:#fafafa"></div>
<svg style="left:7px;top:726px" width="30" height="50" viewBox="0 0 30 50"><defs><linearGradient id="rg" x1="0" y1="0" x2="0" y2="1"><stop offset="0" stop-color="#fff"/><stop offset=".55" stop-color="#fff"/><stop offset="1" stop-color="#8a8a8a"/></linearGradient><clipPath id="rc"><circle cx="14.9" cy="15.4" r="12.6"/></clipPath></defs>
<circle cx="14.9" cy="15.4" r="12.8" fill="url(#rg)" stroke="#1a1a1a" stroke-width="1.1"/>
<path d="M20 10 L24.4 5.8" stroke="#f33" stroke-width="1"/>
<circle cx="14.9" cy="16" r="7.8" fill="#3c3c3c" stroke="#1a1a1a" stroke-width="1.1"/>
<circle cx="14.9" cy="26.3" r="12.7" fill="#fff" stroke="#1a1a1a" stroke-width="1.1"/>
<path d="M6.1 34.7 L23.6 17.2" stroke="#f33" stroke-width="1"/>
<g fill="none" stroke="#9c9c9c" stroke-width="1.1"><path d="M8.8 43 Q14.8 48.6 20.8 43"/><path d="M7.2 44.8 L8.4 41.6 L11.2 43.4 Z M22.6 44.8 L21.4 41.6 L18.6 43.4 Z" fill="#9c9c9c" stroke="none"/></g></svg>
<!--/TOOLS-->
<!--CANVAS-->
<div class="t" style="left:542.2px;top:221.9px;font-size:10.5px;color:#fff;transform:scaleX(.9);transform-origin:0 0">Artboard1</div>
<div class="abs" style="left:540px;top:237px;width:345px;height:488px;background:#fff;border:1px solid #2c6fe0"></div>
<svg style="left:0;top:0" width="1600" height="891" viewBox="0 0 1600 891"><g fill="#fff" stroke="#2f6fdf" stroke-width="1"><circle cx="540.5" cy="237.7" r="2.7"/><circle cx="712.5" cy="237.7" r="2.7"/><circle cx="884.5" cy="237.7" r="2.7"/><circle cx="540.5" cy="481" r="2.7"/><circle cx="884.5" cy="481" r="2.7"/><circle cx="540.5" cy="724.6" r="2.7"/><circle cx="712.5" cy="724.6" r="2.7"/><circle cx="884.5" cy="724.6" r="2.7"/></g></svg>
<!--/CANVAS-->
<!--RIGHT-->
<div class="abs" style="left:1364px;top:84px;width:236px;height:24.7px;background:#212121;border-radius:0px;"></div>
<div class="abs" style="left:1371.2px;top:88px;width:3.4px;height:15.6px;background:#565656;border-radius:1.7px;"></div>
<div class="t" style="left:1385.8px;top:90.76px;font-size:9.5px;color:#e2e2e2;-webkit-text-stroke:0.1px #e2e2e2;">Colour</div>
<div class="t" style="left:1424.8px;top:90.76px;font-size:9.5px;color:#e2e2e2;-webkit-text-stroke:0.1px #e2e2e2;">Swatches</div>
<div class="abs" style="left:1472.2px;top:87.4px;width:39.4px;height:16.8px;background:#4b4b4b;border-radius:4.5px;"></div>
<div class="t" style="left:1477.6px;top:90.76px;font-size:9.5px;color:#fff;-webkit-text-stroke:0.45px #fff;">Stroke</div>
<div class="t" style="left:1517px;top:90.76px;font-size:9.5px;color:#e2e2e2;-webkit-text-stroke:0.1px #e2e2e2;">Appearance</div>
<div class="abs" style="left:1577.6px;top:89.2px;width:14.2px;height:13.6px;background:#181818;border-radius:3.2px;border:1px solid #8a8a8a"></div>
<svg style="left:1580.4px;top:92.8px" width="9" height="7" viewBox="0 0 9 7" fill="none"><path d="M1 .8 L4.4 5.6 L7.8 .8" stroke="#fff" stroke-width="1.5"/></svg>
<div class="t" style="left:1371.5px;top:121.97px;font-size:9.6px;color:#f4f4f4;-webkit-text-stroke:0.3px #f4f4f4;">Style:</div>
<div class="abs" style="left:1401px;top:114px;width:99px;height:22px;background:#3a3a3a;border-radius:5.5px;"></div>
<div class="abs" style="left:1401px;top:114px;width:25px;height:22px;background:#1f1f1f;border-radius:5.5px;border:1px solid #686868"></div>
<svg style="left:1406px;top:118px" width="14" height="14" viewBox="0 0 14 14" fill="none"><circle cx="7" cy="7" r="6" stroke="#fff" stroke-width="1.1"/><path d="M4.9 4.9 L9.1 9.1 M9.1 4.9 L4.9 9.1" stroke="#fff" stroke-width="1.2"/></svg>
<svg style="left:1431px;top:118px" width="14" height="14" viewBox="0 0 14 14" fill="none"><path d="M1.4 12.6 L12.6 1.6" stroke="#f4f4f4" stroke-width="1.5"/></svg>
<svg style="left:1457px;top:119px" width="12" height="12" viewBox="0 0 12 12" fill="none"><path d="M1 11.2 L11.2 1" stroke="#f4f4f4" stroke-width="1.8" stroke-dasharray="2.5 2.4"/></svg>
<svg style="left:1481px;top:117.5px" width="15" height="15" viewBox="0 0 15 15" fill="none"><g transform="rotate(45 7.5 7.5)" stroke="#f4f4f4" stroke-width="1.2"><rect x="5.4" y="-.6" width="4.2" height="7" rx="2.1"/><path d="M5.4 7.4 H9.6 L10.4 10 Q10.2 12.6 7.5 15 Q4.8 12.6 4.6 10 Z"/><path d="M5 7.6 H10" stroke-width="1.6"/></g></svg>
<div class="abs" style="left:1364px;top:140px;width:236px;height:1px;background:#353535;border-radius:0px;"></div>
<div class="t" style="left:1371.5px;top:148.97px;font-size:9.6px;color:#f4f4f4;-webkit-text-stroke:0.3px #f4f4f4;">Width:</div>
<div class="abs" style="left:1401px;top:149.2px;width:139px;height:8px;background:#1f1f1f;border-radius:4px;"></div>
<div class="abs" style="left:1401px;top:149.2px;width:8.2px;height:8.2px;background:#e0e0e0;border-radius:4.1px;"></div>
<div class="abs" style="left:1546px;top:145px;width:44.4px;height:16.8px;background:#1f1f1f;border-radius:3.5px;"></div>
<div class="t" style="left:1548.6px;top:147.97px;font-size:9.6px;color:#fff;-webkit-text-stroke:0.3px #fff;">0 pt</div>
<div class="t" style="left:1371.5px;top:171.47px;font-size:9.6px;color:#f4f4f4;-webkit-text-stroke:0.3px #f4f4f4;">Cap:</div>
<div class="abs" style="left:1401px;top:164px;width:74.2px;height:21.8px;background:#3a3a3a;border-radius:5.5px;"></div>
<div class="abs" style="left:1425.6px;top:164px;width:25px;height:21.8px;background:#1f1f1f;border-radius:5.5px;border:1px solid #686868"></div>
<svg style="left:1405px;top:168px" width="17" height="13" viewBox="0 0 17 13" fill="none"><path d="M1.2 1.6 H9.6 Q15.2 2 15.2 6.6 Q15.2 11.2 9.6 11.6 H1.2 Z" stroke="#f4f4f4" stroke-width="1.1"/><path d="M1.2 6.6 H7.6" stroke="#f4f4f4" stroke-width="1.1"/><circle cx="9.5" cy="6.6" r="1.9" stroke="#f4f4f4" stroke-width="1.1"/></svg>
<svg style="left:1430px;top:168px" width="17" height="13" viewBox="0 0 17 13" fill="none"><rect x="1.2" y="1.6" width="8.4" height="10" stroke="#f4f4f4" stroke-width="1.1"/><path d="M1.2 6.6 H10.8" stroke="#f4f4f4" stroke-width="1.1"/><circle cx="12.8" cy="6.6" r="1.9" stroke="#f4f4f4" stroke-width="1.1"/></svg>
<svg style="left:1455px;top:168px" width="17" height="13" viewBox="0 0 17 13" fill="none"><rect x="1.2" y="1.6" width="13.8" height="10" stroke="#f4f4f4" stroke-width="1.1"/><path d="M1.2 6.6 H8.4" stroke="#f4f4f4" stroke-width="1.1"/><circle cx="10.3" cy="6.6" r="1.9" stroke="#f4f4f4" stroke-width="1.1"/></svg>
<div class="t" style="left:1371.5px;top:197.57px;font-size:9.6px;color:#f4f4f4;-webkit-text-stroke:0.3px #f4f4f4;">Join:</div>
<div class="abs" style="left:1401px;top:190.1px;width:74.2px;height:21.8px;background:#3a3a3a;border-radius:5.5px;"></div>
<div class="abs" style="left:1401.0px;top:190.1px;width:25px;height:21.8px;background:#1f1f1f;border-radius:5.5px;border:1px solid #686868"></div>
<svg style="left:0;top:0" width="0" height="0"><defs><pattern id="hat" width="2" height="2" patternUnits="userSpaceOnUse"><rect width="2" height="2" fill="#6a6a6a"/><rect width="1" height="1" fill="#e8e8e8"/><rect x="1" y="1" width="1" height="1" fill="#e8e8e8"/></pattern></defs></svg>
<svg style="left:1406px;top:193px" width="15" height="15" viewBox="0 0 15 15" fill="none"><path d="M1.2 1.2 Q1.2 13.6 13.4 13.6" stroke="#f4f4f4" stroke-width="1.1" stroke-width="1.2"/><path d="M3.4 1.2 H7.6 Q7.6 7.2 13.4 7.2 V11.4 Q3.4 11.4 3.4 1.2 Z" fill="url(#hat)"/></svg>
<svg style="left:1431px;top:193px" width="15" height="15" viewBox="0 0 15 15" fill="none"><path d="M1.2 1.2 V5.8 L8.6 13.6 H13.4" stroke="#f4f4f4" stroke-width="1.1" stroke-width="1.2"/><path d="M3.4 1.2 H7.6 V5 L10 7.2 H13.4 V11.4 H9.4 L3.4 5.4 Z" fill="url(#hat)"/></svg>
<svg style="left:1456px;top:193px" width="15" height="15" viewBox="0 0 15 15" fill="none"><path d="M1.2 1.2 V13.6 H13.4" stroke="#f4f4f4" stroke-width="1.1" stroke-width="1.2"/><path d="M3.4 1.2 H7.8 V7.2 H13.4 V11.4 H3.4 Z" fill="url(#hat)"/></svg>
<div class="t" style="left:1514.6px;top:196.67px;font-size:9.6px;color:#f4f4f4;-webkit-text-stroke:0.3px #f4f4f4;">Mitre:</div>
<div class="abs" style="left:1546px;top:193px;width:44.4px;height:17px;background:#1f1f1f;border-radius:3.5px;"></div>
<div class="t" style="left:1548.4px;top:196.67px;font-size:9.6px;color:#fff;-webkit-text-stroke:0.3px #fff;">2</div>
<div class="t" style="left:1371.5px;top:223.17px;font-size:9.6px;color:#f4f4f4;-webkit-text-stroke:0.3px #f4f4f4;">Align:</div>
<div class="abs" style="left:1401px;top:216.2px;width:74.2px;height:21.8px;background:#3a3a3a;border-radius:5.5px;"></div>
<div class="abs" style="left:1401.0px;top:216.2px;width:25px;height:21.8px;background:#1f1f1f;border-radius:5.5px;border:1px solid #686868"></div>
<svg style="left:1406px;top:220px" width="15" height="14" viewBox="0 0 15 14" fill="none"><path d="M1 13 V1 H13.4 V4.6 H4.4 V13 Z" fill="#fff"/><path d="M5.6 13 V5.8 H13.4 V8.6 H8.4 V13 Z" fill="#fff"/><path d="M5 13 V5.2 H13.4" stroke="#1f1f1f" stroke-width="1"/><circle cx="5" cy="5" r="1.3" fill="#111"/></svg>
<svg style="left:1431px;top:220px" width="15" height="14" viewBox="0 0 15 14" fill="none"><defs><linearGradient id="ag" x1="0" x2="1"><stop offset="0" stop-color="#9a9a9a"/><stop offset=".5" stop-color="#eee"/></linearGradient></defs><path d="M2 13 V2.6 H13.6 V8 H8.6 V13 Z" fill="url(#ag)"/><path d="M2 6 V2.4 H13.6" stroke="#eee" stroke-width=".9"/><circle cx="2.6" cy="3" r="1.5" fill="#222" stroke="#eee" stroke-width=".9"/></svg>
<svg style="left:1456px;top:220px" width="15" height="14" viewBox="0 0 15 14" fill="none"><path d="M1.4 13 V1.4 H13.4 V6 H6.6 V13 Z" fill="#f2f2f2"/><path d="M8.2 13 V7.8 H13.6" stroke="#f2f2f2" stroke-width=".9"/><path d="M6.8 13 V6.2 H13.4" stroke="#222" stroke-width=".9"/><circle cx="6.6" cy="6" r="1.4" fill="#111"/></svg>
<div class="abs" style="left:1372px;top:244px;width:219px;height:1px;background:#343434;border-radius:0px;"></div>
<div class="t" style="left:1371.5px;top:254.57px;font-size:9.6px;color:#f4f4f4;-webkit-text-stroke:0.3px #f4f4f4;">Order:</div>
<div class="abs" style="left:1401px;top:248.2px;width:49.4px;height:21.6px;background:#3a3a3a;border-radius:5.5px;"></div>
<div class="abs" style="left:1425.6px;top:248.2px;width:24.8px;height:21.6px;background:#1f1f1f;border-radius:5.5px;border:1px solid #686868"></div>
<svg style="left:1407.5px;top:253.5px" width="12" height="11" viewBox="0 0 12 11" fill="none"><rect x=".8" y=".8" width="6.4" height="6.2" rx="1" fill="#3a3a3a" stroke="#f4f4f4" stroke-width="1.2"/><rect x="3.2" y="3" width="7.6" height="7.4" rx="1" fill="#3a3a3a"/><rect x="4.4" y="4.2" width="6.2" height="6" rx=".8" fill="#dedede"/></svg>
<svg style="left:1432.5px;top:253.5px" width="12" height="11" viewBox="0 0 12 11" fill="none"><path d="M4.4 8 V10.2 H10.6 V4 H8.2" stroke="#f4f4f4" stroke-width="1.2"/><rect x=".8" y=".8" width="6.8" height="6.6" rx="1" stroke="#f4f4f4" stroke-width="1.2"/><rect x="3.2" y="3.2" width="2" height="1.9" fill="#f4f4f4"/></svg>
<div class="abs" style="left:1494px;top:254.6px;width:10px;height:10px;background:#1f1f1f;border-radius:2.2px;"></div>
<div class="t" style="left:1508.2px;top:254.75px;font-size:9.75px;color:#f4f4f4;-webkit-text-stroke:0.3px #f4f4f4;">Scale with object</div>
<div class="abs" style="left:1372px;top:274.4px;width:219px;height:1px;background:#343434;border-radius:0px;"></div>
<div class="t" style="left:1371.5px;top:285.07px;font-size:9.6px;color:#f4f4f4;-webkit-text-stroke:0.3px #f4f4f4;">Start:</div>
<div class="abs" style="left:1400.6px;top:280px;width:49.2px;height:20.2px;background:#3d3d3d;border-radius:4px;"></div>
<div class="abs" style="left:1414px;top:289.6px;width:22px;height:1.3px;background:#a8a8a8;border-radius:0px;"></div>
<svg style="left:1440.5px;top:284.5px" width="6" height="11" viewBox="0 0 6 11" fill="none"><path d="M.8 3.8 L3 1.2 L5.2 3.8 M.8 7.2 L3 9.8 L5.2 7.2" stroke="#aaa" stroke-width="1.1"/></svg>
<div class="abs" style="left:1455px;top:281.8px;width:51.6px;height:16.6px;background:#3d3d3d;border-radius:3.5px;"></div>
<div class="abs" style="left:1495.4px;top:281.8px;width:1px;height:16.6px;background:#454545;border-radius:0px;"></div>
<div class="t" style="left:1457.2px;top:284.87px;font-size:9.6px;color:#7a7a7a;">100 %</div>
<svg style="left:1497.8px;top:288px" width="7" height="5" viewBox="0 0 7 5" fill="none"><path d="M1.4 1 L3.5 3.4 L5.6 1" stroke="#bdbdbd" stroke-width="1.4"/></svg>
<div class="t" style="left:1371.5px;top:311.47px;font-size:9.6px;color:#f4f4f4;-webkit-text-stroke:0.3px #f4f4f4;">End:</div>
<div class="abs" style="left:1400.6px;top:306px;width:49.2px;height:20px;background:#3d3d3d;border-radius:4px;"></div>
<div class="abs" style="left:1406.8px;top:315.4px;width:22px;height:1.3px;background:#a8a8a8;border-radius:0px;"></div>
<svg style="left:1440.5px;top:310.5px" width="6" height="11" viewBox="0 0 6 11" fill="none"><path d="M.8 3.8 L3 1.2 L5.2 3.8 M.8 7.2 L3 9.8 L5.2 7.2" stroke="#aaa" stroke-width="1.1"/></svg>
<div class="abs" style="left:1455px;top:307.6px;width:51.6px;height:16.6px;background:#3d3d3d;border-radius:3.5px;"></div>
<div class="abs" style="left:1495.4px;top:307.6px;width:1px;height:16.6px;background:#454545;border-radius:0px;"></div>
<div class="t" style="left:1457.2px;top:310.67px;font-size:9.6px;color:#7a7a7a;">100 %</div>
<svg style="left:1497.8px;top:313.8px" width="7" height="5" viewBox="0 0 7 5" fill="none"><path d="M1.4 1 L3.5 3.4 L5.6 1" stroke="#bdbdbd" stroke-width="1.4"/></svg>
<svg style="left:1510px;top:291px" width="10" height="23" viewBox="0 0 10 23" fill="none"><g stroke="#8c8c8c" stroke-width="1"><path d="M.6 1 H5 V3"/><rect x="3" y="4" width="5.4" height="6.6" rx="1.6"/><rect x="3" y="12" width="5.4" height="6.6" rx="1.6"/><path d="M5.6 8.6 V14"/><path d="M.6 22 H5 V19.6"/></g></svg>
<div class="abs" style="left:1541.2px;top:278.4px;width:49.8px;height:21.6px;background:#3a3a3a;border-radius:5.5px;"></div>
<div class="abs" style="left:1541.2px;top:278.4px;width:25px;height:21.6px;background:#1f1f1f;border-radius:5.5px;border:1px solid #7a7a7a"></div>
<svg style="left:1546px;top:283px" width="16" height="13" viewBox="0 0 16 13" fill="none"><g stroke="#7c7c7c" stroke-width="1.1"><path d="M1 1.6 L10 6.4 L1 11.4 M1.6 6.4 H10"/><circle cx="12.4" cy="6.4" r="2"/></g></svg>
<svg style="left:1571px;top:283px" width="16" height="13" viewBox="0 0 16 13" fill="none"><g stroke="#777" stroke-width="1.1"><path d="M5.6 1.4 L14.6 6.4 L5.6 11.6 M.8 6.4 H3.2 M7.6 6.4 H10"/><circle cx="5.4" cy="6.4" r="2"/></g></svg>
<svg style="left:1547px;top:309px" width="15" height="14" viewBox="0 0 15 14" fill="none"><g stroke="#6c6c6c" stroke-width="1.1"><path d="M1.2 4 H13.4 M9.6 .8 L13.4 4 L9.6 7.2 M13.4 10.4 H1.2 M5 7.2 L1.2 10.4 L5 13.6"/></g></svg>
<svg style="left:1573px;top:309px" width="12" height="15" viewBox="0 0 12 15" fill="none"><g stroke="#6c6c6c" stroke-width="1"><path d="M.6 2.8 H11 M3.8 2.6 V.8 H7.8 V2.6 M1.6 3 V13.8 H10 V3 M4.2 5.2 V11.6 M5.8 5.2 V11.6 M7.4 5.2 V11.6"/></g></svg>
<div class="abs" style="left:1372px;top:331px;width:219px;height:1px;background:#343434;border-radius:0px;"></div>
<div class="abs" style="left:1373.8px;top:345.2px;width:88.2px;height:14.6px;background:#676767;border-radius:3.5px;background:linear-gradient(#6b6b6b,#636363)"></div>
<div class="t" style="left:1391.4px;top:346.87px;font-size:9.6px;color:#fff;-webkit-text-stroke:0.3px #fff;">Properties...</div>
<div class="t" style="left:1495px;top:346.87px;font-size:9.6px;color:#f4f4f4;-webkit-text-stroke:0.3px #f4f4f4;">Pressure:</div>
<div class="abs" style="left:1538.2px;top:343.4px;width:52.4px;height:15.6px;background:#6c6c6c;border-radius:3.5px;border:1px solid #7c7c7c;box-shadow:inset 0 1px 0 #888"></div>
<div class="abs" style="left:1364px;top:374px;width:236px;height:2px;background:#161616;border-radius:0px;"></div>
<div class="abs" style="left:1364px;top:376px;width:236px;height:24.8px;background:#212121;border-radius:0px;"></div>
<div class="abs" style="left:1371.2px;top:380px;width:3.4px;height:15.6px;background:#565656;border-radius:1.7px;"></div>
<div class="t" style="left:1385.6px;top:383.16px;font-size:9.5px;color:#e2e2e2;-webkit-text-stroke:0.1px #e2e2e2;">Layers</div>
<div class="abs" style="left:1420px;top:379.6px;width:67.2px;height:16.8px;background:#4b4b4b;border-radius:4.5px;"></div>
<div class="t" style="left:1425.2px;top:383.16px;font-size:9.5px;color:#fff;-webkit-text-stroke:0.45px #fff;">Path Brushes</div>
<div class="t" style="left:1492.6px;top:383.16px;font-size:9.5px;color:#e2e2e2;-webkit-text-stroke:0.1px #e2e2e2;">Quick FX</div>
<div class="t" style="left:1542.6px;top:383.16px;font-size:9.5px;color:#e2e2e2;-webkit-text-stroke:0.1px #e2e2e2;">Styles</div>
<div class="abs" style="left:1577.6px;top:381.2px;width:14.2px;height:13.6px;background:#181818;border-radius:3.2px;border:1px solid #8a8a8a"></div>
<svg style="left:1580.4px;top:384.8px" width="9" height="7" viewBox="0 0 9 7" fill="none"><path d="M1 .8 L4.4 5.6 L7.8 .8" stroke="#fff" stroke-width="1.5"/></svg>
<div class="abs" style="left:1371.2px;top:406.2px;width:221px;height:16px;background:#1f1f1f;border-radius:3.5px;"></div>
<svg style="left:1376.5px;top:409px" width="10" height="10" viewBox="0 0 10 10" fill="none"><circle cx="4" cy="4" r="3" stroke="#e8e8e8" stroke-width="1.2"/><path d="M6.2 6.2 L8.8 8.8" stroke="#e8e8e8" stroke-width="1.5"/></svg>
<div class="t" style="left:1395.6px;top:409.33px;font-size:10px;color:#696969;">Search</div>
<div class="abs" style="left:1370.2px;top:429.4px;width:222px;height:17.6px;background:#666;border-radius:4.5px;background:linear-gradient(#6c6c6c,#606060)"></div>
<div class="t" style="left:1374.2px;top:432.27px;font-size:9.6px;color:#fff;-webkit-text-stroke:0.5px #fff;">Dry Media</div>
<svg style="left:1582px;top:432.5px" width="7" height="12" viewBox="0 0 7 12" fill="none"><path d="M.9 4.2 L3.4 1.4 L5.9 4.2 M.9 7.6 L3.4 10.4 L5.9 7.6" stroke="#f0f0f0" stroke-width="1.3"/></svg>
<div class="abs" style="left:1368px;top:448px;width:228px;height:1px;background:#353535;border-radius:0px;"></div>
<div class="abs" style="left:1364px;top:455px;width:236px;height:286px;background:#161616;border-radius:0px;"></div>
<div class="abs" style="left:1598px;top:455px;width:2px;height:286px;background:#1e1e1e;border-radius:0px;"></div>
<svg style="left:0;top:0" width="0" height="0"><defs><filter id="grainA" x="-5%" y="-20%" width="110%" height="140%"><feTurbulence type="fractalNoise" baseFrequency="1.1" numOctaves="2" seed="3" result="n"/><feColorMatrix in="n" type="matrix" values="0 0 0 0 0  0 0 0 0 0  0 0 0 0 0  0 0 0 -7 4.1" result="a"/><feComposite in="SourceGraphic" in2="a" operator="in"/></filter><filter id="grainB" x="-5%" y="-20%" width="110%" height="140%"><feTurbulence type="fractalNoise" baseFrequency="1.3" numOctaves="2" seed="8" result="n"/><feColorMatrix in="n" type="matrix" values="0 0 0 0 0  0 0 0 0 0  0 0 0 0 0  0 0 0 -22 8.2" result="a"/><feComposite in="SourceGraphic" in2="a" operator="in"/></filter><filter id="grainC" x="-5%" y="-20%" width="110%" height="140%"><feTurbulence type="fractalNoise" baseFrequency="0.9" numOctaves="3" seed="5" result="n"/><feColorMatrix in="n" type="matrix" values="0 0 0 0 0  0 0 0 0 0  0 0 0 0 0  0 0 0 -5 3.1" result="a"/><feComposite in="SourceGraphic" in2="a" operator="in"/></filter><filter id="grainD" x="-5%" y="-20%" width="110%" height="140%"><feTurbulence type="fractalNoise" baseFrequency="0.8" numOctaves="3" seed="11" result="n"/><feColorMatrix in="n" type="matrix" values="0 0 0 0 0  0 0 0 0 0  0 0 0 0 0  0 0 0 -9 4.6" result="a"/><feComposite in="SourceGraphic" in2="a" operator="in"/></filter><linearGradient id="gSq" gradientUnits="userSpaceOnUse" x1="1393" x2="1590"><stop offset="0" stop-color="#fff"/><stop offset=".25" stop-color="#efefef"/><stop offset=".6" stop-color="#c4c4c4"/><stop offset="1" stop-color="#a4a4a4"/></linearGradient><linearGradient id="gVar" gradientUnits="userSpaceOnUse" x1="1393" x2="1565"><stop offset="0" stop-color="#fff"/><stop offset=".3" stop-color="#ececec"/><stop offset=".6" stop-color="#a0a0a0"/><stop offset=".85" stop-color="#6e6e6e"/><stop offset="1" stop-color="#555" stop-opacity="0"/></linearGradient><linearGradient id="gEndR" gradientUnits="userSpaceOnUse" x1="1572" x2="1590"><stop offset="0" stop-color="#fff" stop-opacity="0"/><stop offset="1" stop-color="#fff" stop-opacity="1"/></linearGradient></defs></svg>
<div class="abs" style="left:1364px;top:456px;width:234px;height:51.7px;background:#404040;box-shadow:inset -1px 0 0 #4a4a4a,inset 0 1px 0 #474747,inset 0 -1px 0 #474747"></div>
<div class="abs" style="left:1364px;top:509.6px;width:234px;height:51.8px;background:#404040;box-shadow:inset -1px 0 0 #4a4a4a,inset 0 1px 0 #474747,inset 0 -1px 0 #474747"></div>
<div class="abs" style="left:1364px;top:563.4px;width:234px;height:51.7px;background:#404040;box-shadow:inset -1px 0 0 #4a4a4a,inset 0 1px 0 #474747,inset 0 -1px 0 #474747"></div>
<div class="abs" style="left:1364px;top:617.1px;width:234px;height:51.7px;background:#404040;box-shadow:inset -1px 0 0 #4a4a4a,inset 0 1px 0 #474747,inset 0 -1px 0 #474747"></div>
<div class="abs" style="left:1364px;top:670.8px;width:234px;height:51.5px;background:#404040;box-shadow:inset -1px 0 0 #4a4a4a,inset 0 1px 0 #474747,inset 0 -1px 0 #474747"></div>
<div class="abs" style="left:1364px;top:724.3px;width:234px;height:16.6px;background:#404040;box-shadow:inset -1px 0 0 #4a4a4a,inset 0 1px 0 #474747,inset 0 -1px 0 #474747"></div>
<svg style="left:0;top:456px" width="1600" height="52" viewBox="0 0 1600 52"><path d="M1396.0 14.7L1399.2 13.9L1402.4 13.7L1405.6 12.9L1408.8 12.4L1412.0 11.9L1415.3 11.4L1418.5 10.9L1421.8 10.4L1425.1 10.1L1428.4 9.8L1431.7 9.5L1435.0 9.5L1438.3 9.1L1441.6 9.4L1445.0 9.0L1448.3 9.1L1451.7 9.1L1455.0 9.5L1458.3 9.6L1461.7 9.6L1465.1 9.8L1468.4 10.5L1471.7 10.8L1475.0 11.2L1478.3 11.7L1481.5 12.7L1484.7 13.3L1487.9 13.8L1491.2 14.0L1494.3 15.0L1497.5 15.4L1500.8 15.7L1503.9 16.5L1507.1 16.9L1510.3 17.6L1513.6 17.9L1516.8 18.2L1519.9 19.0L1523.1 19.1L1526.3 19.3L1529.5 19.6L1532.6 20.0L1535.8 19.8L1538.9 20.2L1542.1 20.0L1545.2 19.6L1548.4 19.8L1551.6 19.6L1554.8 19.4L1558.1 19.3L1561.2 18.7L1564.5 18.6L1567.7 18.3L1570.9 17.9L1574.1 17.8L1577.3 17.3L1580.5 17.1L1583.7 16.6L1586.9 16.1L1588.0 22.7L1584.8 23.6L1581.6 24.4L1578.3 24.8L1575.0 25.3L1571.7 25.4L1568.5 26.2L1565.2 26.7L1561.9 26.6L1558.7 26.9L1555.4 27.6L1552.2 27.7L1548.9 28.0L1545.6 27.7L1542.3 28.1L1539.0 28.3L1535.7 28.0L1532.3 28.2L1529.0 27.9L1525.7 27.6L1522.4 27.5L1519.1 27.0L1515.8 27.0L1512.5 26.8L1509.3 26.2L1506.0 26.0L1502.7 25.7L1499.5 25.4L1496.2 25.3L1492.9 24.6L1489.6 24.4L1486.3 24.0L1483.0 23.7L1479.8 23.0L1476.6 22.8L1473.4 22.1L1470.2 21.7L1467.1 21.6L1463.9 21.2L1460.8 21.0L1457.7 20.8L1454.5 20.6L1451.4 20.3L1448.3 20.6L1445.1 20.2L1442.0 20.4L1438.9 20.8L1435.7 20.7L1432.5 21.0L1429.4 21.7L1426.2 21.8L1423.0 22.4L1419.8 22.5L1416.6 22.8L1413.4 23.0L1410.1 23.0L1406.8 23.4L1403.6 23.6L1400.3 23.6L1396.9 23.5A4.6 4.6 0 0 1 1396.0 14.7Z" fill="#fbfbfb"/><path d="M1573.5 17.6L1574.8 17.4L1576.1 17.3L1577.4 17.1L1578.8 17.0L1580.1 16.9L1581.4 16.7L1582.7 16.6L1584.0 16.4L1585.3 16.3L1586.6 16.1L1587.9 16.0L1589.1 22.8L1587.8 23.1L1586.4 23.3L1585.1 23.6L1583.8 23.9L1582.4 24.1L1581.1 24.4L1579.8 24.6L1578.5 24.8L1577.1 25.0L1575.8 25.2L1574.5 25.4Z" fill="#424242" opacity=".55" filter="url(#grainD)"/></svg>
<div class="t" style="left:1372.3px;top:472.45px;font-size:8.8px;color:#fff;-webkit-text-stroke:0.4px #fff">128</div>
<div class="t" style="left:1408.8px;top:494.32px;font-size:8.6px;color:#fff;-webkit-text-stroke:0.45px #fff">Round Pastel</div>
<svg style="left:0;top:509.6px" width="1600" height="52" viewBox="0 0 1600 52"><path d="M1393.1 15.0L1396.4 14.7L1399.6 13.8L1402.9 13.4L1406.2 12.8L1409.5 12.4L1412.8 12.0L1416.1 11.2L1419.5 11.0L1422.8 10.7L1426.2 10.1L1429.6 9.8L1433.0 9.9L1436.4 9.4L1439.8 9.5L1443.2 9.0L1446.6 8.9L1450.1 9.2L1453.5 9.0L1456.9 9.7L1460.3 9.7L1463.7 10.3L1467.2 10.4L1470.6 11.1L1474.0 11.5L1477.4 11.8L1480.7 12.6L1484.0 13.3L1487.3 13.8L1490.6 14.3L1493.9 14.8L1497.1 15.5L1500.5 15.8L1503.7 16.4L1507.0 16.9L1510.3 17.5L1513.6 17.6L1516.9 18.2L1520.2 18.9L1523.5 18.9L1526.7 19.1L1529.9 19.6L1533.2 19.5L1536.4 20.0L1539.6 19.8L1542.9 19.8L1546.1 19.7L1549.4 19.3L1552.7 19.2L1555.9 18.7L1559.2 18.7L1562.6 18.8L1565.8 18.3L1569.1 17.6L1572.4 17.6L1575.7 17.5L1579.0 17.0L1582.3 16.7L1585.5 15.6L1588.8 15.2L1590.1 22.9L1586.8 23.6L1583.4 23.9L1580.1 24.8L1576.8 25.5L1573.4 25.8L1570.0 26.1L1566.7 26.4L1563.3 27.1L1559.9 27.0L1556.6 27.3L1553.3 27.7L1549.9 28.1L1546.5 27.8L1543.1 28.2L1539.7 28.5L1536.3 28.4L1532.9 28.4L1529.5 27.8L1526.1 28.1L1522.7 27.9L1519.3 27.1L1515.9 27.2L1512.6 26.8L1509.2 26.3L1505.9 25.9L1502.5 25.8L1499.1 25.6L1495.9 24.7L1492.5 24.5L1489.1 24.0L1485.7 24.1L1482.4 23.4L1479.1 22.8L1475.8 22.4L1472.5 22.0L1469.2 21.6L1466.0 21.4L1462.8 20.6L1459.5 20.8L1456.3 20.4L1453.1 20.6L1449.9 20.0L1446.7 20.2L1443.5 20.6L1440.3 20.7L1437.0 20.6L1433.8 20.8L1430.5 21.1L1427.3 21.5L1424.0 21.8L1420.7 22.5L1417.4 22.2L1414.1 22.7L1410.8 23.1L1407.4 23.2L1404.0 23.3L1400.7 24.0L1397.3 24.0L1394.0 24.3Z" fill="url(#gSq)"/><path d="M1393.1 15.0L1396.4 14.7L1399.6 13.8L1402.9 13.4L1406.2 12.8L1409.5 12.4L1412.8 12.0L1416.1 11.2L1419.5 11.0L1422.8 10.7L1426.2 10.1L1429.6 9.8L1433.0 9.9L1436.4 9.4L1439.8 9.5L1443.2 9.0L1446.6 8.9L1450.1 9.2L1453.5 9.0L1456.9 9.7L1460.3 9.7L1463.7 10.3L1467.2 10.4L1470.6 11.1L1474.0 11.5L1477.4 11.8L1480.7 12.6L1484.0 13.3L1487.3 13.8L1490.6 14.3L1493.9 14.8L1497.1 15.5L1500.5 15.8L1503.7 16.4L1507.0 16.9L1510.3 17.5L1513.6 17.6L1516.9 18.2L1520.2 18.9L1523.5 18.9L1526.7 19.1L1529.9 19.6L1533.2 19.5L1536.4 20.0L1539.6 19.8L1542.9 19.8L1546.1 19.7L1549.4 19.3L1552.7 19.2L1555.9 18.7L1559.2 18.7L1562.6 18.8L1565.8 18.3L1569.1 17.6L1572.4 17.6L1575.7 17.5L1579.0 17.0L1582.3 16.7L1585.5 15.6L1588.8 15.2L1590.1 22.9L1586.8 23.6L1583.4 23.9L1580.1 24.8L1576.8 25.5L1573.4 25.8L1570.0 26.1L1566.7 26.4L1563.3 27.1L1559.9 27.0L1556.6 27.3L1553.3 27.7L1549.9 28.1L1546.5 27.8L1543.1 28.2L1539.7 28.5L1536.3 28.4L1532.9 28.4L1529.5 27.8L1526.1 28.1L1522.7 27.9L1519.3 27.1L1515.9 27.2L1512.6 26.8L1509.2 26.3L1505.9 25.9L1502.5 25.8L1499.1 25.6L1495.9 24.7L1492.5 24.5L1489.1 24.0L1485.7 24.1L1482.4 23.4L1479.1 22.8L1475.8 22.4L1472.5 22.0L1469.2 21.6L1466.0 21.4L1462.8 20.6L1459.5 20.8L1456.3 20.4L1453.1 20.6L1449.9 20.0L1446.7 20.2L1443.5 20.6L1440.3 20.7L1437.0 20.6L1433.8 20.8L1430.5 21.1L1427.3 21.5L1424.0 21.8L1420.7 22.5L1417.4 22.2L1414.1 22.7L1410.8 23.1L1407.4 23.2L1404.0 23.3L1400.7 24.0L1397.3 24.0L1394.0 24.3Z" fill="#666" opacity=".22" filter="url(#grainB)"/><path d="M1577.4 16.8L1578.8 16.7L1580.1 16.5L1581.4 16.3L1582.7 16.2L1584.0 16.0L1585.4 15.8L1586.7 15.6L1588.0 15.4L1589.3 15.2L1590.7 23.0L1589.3 23.3L1588.0 23.5L1586.6 23.8L1585.3 24.0L1583.9 24.2L1582.6 24.5L1581.2 24.7L1579.9 24.9L1578.6 25.1Z" fill="#3f3f3f" opacity=".7" filter="url(#grainD)"/></svg>
<div class="t" style="left:1372.3px;top:526.05px;font-size:8.8px;color:#fff;-webkit-text-stroke:0.4px #fff">128</div>
<div class="t" style="left:1408.8px;top:547.92px;font-size:8.6px;color:#fff;-webkit-text-stroke:0.45px #fff">Square Pastel</div>
<svg style="left:0;top:563.4px" width="1600" height="52" viewBox="0 0 1600 52"><path d="M1393.1 14.9L1396.3 14.3L1399.6 14.0L1402.9 13.3L1406.1 12.5L1409.4 12.0L1412.8 12.0L1416.1 11.5L1419.5 11.1L1422.8 10.5L1426.2 10.4L1429.6 9.9L1433.0 9.5L1436.4 9.6L1439.8 9.2L1443.2 9.1L1446.6 9.4L1450.1 9.1L1453.5 9.4L1456.9 9.5L1460.3 9.8L1463.8 9.9L1467.2 10.4L1470.6 11.0L1474.0 11.2L1477.4 11.7L1480.7 12.5L1484.0 13.2L1487.3 13.7L1490.6 13.9L1493.9 14.5L1497.2 15.2L1500.5 15.6L1503.8 16.2L1507.0 17.0L1510.3 17.6L1513.6 17.8L1516.9 18.3L1520.2 18.8L1523.4 19.2L1526.7 19.4L1529.9 19.6L1533.2 19.9L1536.4 20.0L1539.6 19.9L1542.9 19.6L1546.1 19.6L1549.4 19.6L1552.7 19.4L1556.0 19.0L1559.3 18.9L1562.6 18.7L1565.8 18.2L1569.1 18.1L1572.4 17.5L1575.7 17.3L1579.0 16.7L1582.3 16.3L1585.5 15.9L1588.8 15.4L1590.1 22.6L1586.8 23.5L1583.4 24.0L1580.1 24.8L1576.8 25.5L1573.3 25.4L1570.0 25.9L1566.6 26.3L1563.3 26.8L1560.0 27.1L1556.6 27.6L1553.3 27.9L1549.9 27.9L1546.5 27.8L1543.1 28.2L1539.7 28.5L1536.3 28.5L1532.9 28.4L1529.5 28.2L1526.1 27.7L1522.7 27.4L1519.3 27.4L1515.9 27.0L1512.6 26.8L1509.2 26.6L1505.9 26.2L1502.5 25.9L1499.1 25.6L1495.8 25.0L1492.4 24.8L1489.0 24.5L1485.7 24.1L1482.4 23.2L1479.0 23.0L1475.7 22.5L1472.5 22.1L1469.2 21.9L1466.0 21.1L1462.8 21.0L1459.6 20.5L1456.3 20.3L1453.1 20.2L1449.9 20.2L1446.7 20.1L1443.5 20.1L1440.2 20.6L1437.0 20.7L1433.8 21.1L1430.5 21.3L1427.3 21.6L1424.0 21.7L1420.7 22.4L1417.4 22.3L1414.0 22.5L1410.7 23.0L1407.4 23.2L1404.1 23.6L1400.7 23.7L1397.3 24.0L1393.9 24.0Z" fill="url(#gSq)"/><path d="M1393.1 14.9L1396.3 14.3L1399.6 14.0L1402.9 13.3L1406.1 12.5L1409.4 12.0L1412.8 12.0L1416.1 11.5L1419.5 11.1L1422.8 10.5L1426.2 10.4L1429.6 9.9L1433.0 9.5L1436.4 9.6L1439.8 9.2L1443.2 9.1L1446.6 9.4L1450.1 9.1L1453.5 9.4L1456.9 9.5L1460.3 9.8L1463.8 9.9L1467.2 10.4L1470.6 11.0L1474.0 11.2L1477.4 11.7L1480.7 12.5L1484.0 13.2L1487.3 13.7L1490.6 13.9L1493.9 14.5L1497.2 15.2L1500.5 15.6L1503.8 16.2L1507.0 17.0L1510.3 17.6L1513.6 17.8L1516.9 18.3L1520.2 18.8L1523.4 19.2L1526.7 19.4L1529.9 19.6L1533.2 19.9L1536.4 20.0L1539.6 19.9L1542.9 19.6L1546.1 19.6L1549.4 19.6L1552.7 19.4L1556.0 19.0L1559.3 18.9L1562.6 18.7L1565.8 18.2L1569.1 18.1L1572.4 17.5L1575.7 17.3L1579.0 16.7L1582.3 16.3L1585.5 15.9L1588.8 15.4L1590.1 22.6L1586.8 23.5L1583.4 24.0L1580.1 24.8L1576.8 25.5L1573.3 25.4L1570.0 25.9L1566.6 26.3L1563.3 26.8L1560.0 27.1L1556.6 27.6L1553.3 27.9L1549.9 27.9L1546.5 27.8L1543.1 28.2L1539.7 28.5L1536.3 28.5L1532.9 28.4L1529.5 28.2L1526.1 27.7L1522.7 27.4L1519.3 27.4L1515.9 27.0L1512.6 26.8L1509.2 26.6L1505.9 26.2L1502.5 25.9L1499.1 25.6L1495.8 25.0L1492.4 24.8L1489.0 24.5L1485.7 24.1L1482.4 23.2L1479.0 23.0L1475.7 22.5L1472.5 22.1L1469.2 21.9L1466.0 21.1L1462.8 21.0L1459.6 20.5L1456.3 20.3L1453.1 20.2L1449.9 20.2L1446.7 20.1L1443.5 20.1L1440.2 20.6L1437.0 20.7L1433.8 21.1L1430.5 21.3L1427.3 21.6L1424.0 21.7L1420.7 22.4L1417.4 22.3L1414.0 22.5L1410.7 23.0L1407.4 23.2L1404.1 23.6L1400.7 23.7L1397.3 24.0L1393.9 24.0Z" fill="#666" opacity=".2" filter="url(#grainB)"/></svg>
<div class="t" style="left:1372.3px;top:579.85px;font-size:8.8px;color:#fff;-webkit-text-stroke:0.4px #fff">128</div>
<div class="t" style="left:1408.8px;top:601.72px;font-size:8.6px;color:#fff;-webkit-text-stroke:0.45px #fff">Smooth Square Pastel</div>
<svg style="left:0;top:617.1px" width="1600" height="52" viewBox="0 0 1600 52"><path d="M1393.0 13.9L1395.9 13.9L1398.7 13.4L1401.6 13.2L1404.5 12.9L1407.4 12.8L1410.3 12.0L1413.3 12.3L1416.2 11.8L1419.1 11.3L1422.0 10.8L1425.0 10.9L1427.9 10.3L1430.9 10.0L1433.9 10.5L1436.8 10.2L1439.8 10.5L1442.8 10.3L1445.8 10.6L1448.8 10.2L1451.7 10.7L1454.7 10.6L1457.7 11.0L1460.7 11.2L1463.6 12.0L1466.5 12.5L1469.5 12.6L1472.4 13.4L1475.4 13.6L1478.3 14.4L1481.2 14.9L1484.1 15.2L1486.9 16.0L1489.8 16.8L1492.7 17.3L1495.6 17.6L1498.5 18.1L1501.3 18.5L1504.2 19.1L1507.1 19.5L1510.0 20.1L1512.9 20.4L1515.8 20.7L1518.6 21.5L1521.5 21.8L1524.4 22.1L1527.3 22.4L1530.2 22.9L1533.1 22.9L1535.9 23.0L1538.8 23.0L1541.7 23.3L1544.6 23.1L1547.5 23.3L1550.4 23.0L1553.3 23.1L1556.2 22.5L1559.2 22.7L1562.1 22.3L1565.0 22.4L1565.0 22.8L1562.1 22.7L1559.2 23.6L1556.3 23.6L1553.4 24.1L1550.5 24.4L1547.6 24.2L1544.7 24.7L1541.8 24.5L1538.8 24.8L1535.9 25.2L1533.0 25.1L1530.1 25.1L1527.1 24.7L1524.2 24.9L1521.2 24.9L1518.3 24.7L1515.4 24.2L1512.5 24.0L1509.6 23.6L1506.6 23.5L1503.7 23.3L1500.8 22.9L1497.8 22.7L1494.9 22.2L1492.0 22.0L1489.0 21.9L1486.1 21.3L1483.2 20.8L1480.2 20.8L1477.3 20.6L1474.4 20.0L1471.5 19.9L1468.7 19.5L1465.8 19.5L1462.9 19.2L1460.1 19.0L1457.2 19.0L1454.4 18.7L1451.5 18.7L1448.7 19.2L1445.9 19.1L1443.0 19.4L1440.2 19.3L1437.4 19.9L1434.5 19.9L1431.7 20.6L1428.8 20.9L1426.0 21.4L1423.1 21.7L1420.2 21.7L1417.4 22.2L1414.4 22.2L1411.6 22.9L1408.7 23.4L1405.8 23.7L1402.8 23.9L1399.9 24.1L1396.9 24.4L1394.0 25.0Z" fill="url(#gVar)"/><path d="M1393.0 13.9L1395.9 13.9L1398.7 13.4L1401.6 13.2L1404.5 12.9L1407.4 12.8L1410.3 12.0L1413.3 12.3L1416.2 11.8L1419.1 11.3L1422.0 10.8L1425.0 10.9L1427.9 10.3L1430.9 10.0L1433.9 10.5L1436.8 10.2L1439.8 10.5L1442.8 10.3L1445.8 10.6L1448.8 10.2L1451.7 10.7L1454.7 10.6L1457.7 11.0L1460.7 11.2L1463.6 12.0L1466.5 12.5L1469.5 12.6L1472.4 13.4L1475.4 13.6L1478.3 14.4L1481.2 14.9L1484.1 15.2L1486.9 16.0L1489.8 16.8L1492.7 17.3L1495.6 17.6L1498.5 18.1L1501.3 18.5L1504.2 19.1L1507.1 19.5L1510.0 20.1L1512.9 20.4L1515.8 20.7L1518.6 21.5L1521.5 21.8L1524.4 22.1L1527.3 22.4L1530.2 22.9L1533.1 22.9L1535.9 23.0L1538.8 23.0L1541.7 23.3L1544.6 23.1L1547.5 23.3L1550.4 23.0L1553.3 23.1L1556.2 22.5L1559.2 22.7L1562.1 22.3L1565.0 22.4L1565.0 22.8L1562.1 22.7L1559.2 23.6L1556.3 23.6L1553.4 24.1L1550.5 24.4L1547.6 24.2L1544.7 24.7L1541.8 24.5L1538.8 24.8L1535.9 25.2L1533.0 25.1L1530.1 25.1L1527.1 24.7L1524.2 24.9L1521.2 24.9L1518.3 24.7L1515.4 24.2L1512.5 24.0L1509.6 23.6L1506.6 23.5L1503.7 23.3L1500.8 22.9L1497.8 22.7L1494.9 22.2L1492.0 22.0L1489.0 21.9L1486.1 21.3L1483.2 20.8L1480.2 20.8L1477.3 20.6L1474.4 20.0L1471.5 19.9L1468.7 19.5L1465.8 19.5L1462.9 19.2L1460.1 19.0L1457.2 19.0L1454.4 18.7L1451.5 18.7L1448.7 19.2L1445.9 19.1L1443.0 19.4L1440.2 19.3L1437.4 19.9L1434.5 19.9L1431.7 20.6L1428.8 20.9L1426.0 21.4L1423.1 21.7L1420.2 21.7L1417.4 22.2L1414.4 22.2L1411.6 22.9L1408.7 23.4L1405.8 23.7L1402.8 23.9L1399.9 24.1L1396.9 24.4L1394.0 25.0Z" fill="#666" opacity=".3" filter="url(#grainB)"/></svg>
<div class="t" style="left:1371.6px;top:633.55px;font-size:8.8px;color:#fff;-webkit-text-stroke:0.4px #fff">200</div>
<div class="t" style="left:1408.8px;top:655.42px;font-size:8.6px;color:#fff;-webkit-text-stroke:0.45px #fff">Variable Square Pastel</div>
<svg style="left:0;top:670.8px" width="1600" height="52" viewBox="0 0 1600 52"><path d="M1396.5 14.5L1398.5 13.6L1400.7 14.0L1402.7 13.0L1404.9 13.1L1407.0 12.7L1409.1 12.2L1411.2 12.1L1413.3 12.1L1415.5 11.9L1417.6 11.7L1419.7 10.8L1421.8 10.9L1424.0 10.9L1426.1 10.0L1428.3 10.3L1430.4 10.0L1432.6 10.0L1434.8 9.5L1436.9 9.4L1439.1 9.2L1441.3 9.5L1443.5 9.4L1445.7 9.4L1447.8 9.3L1450.0 9.5L1452.2 9.5L1454.4 8.8L1456.6 8.9L1458.8 9.9L1460.9 10.2L1463.1 10.2L1465.3 9.9L1467.5 10.1L1469.6 11.1L1471.9 10.9L1473.9 11.7L1476.2 11.6L1478.3 11.8L1480.5 11.8L1482.5 12.9L1484.7 12.7L1486.8 13.0L1489.0 13.3L1490.9 14.5L1493.1 14.4L1495.2 14.2L1497.2 15.1L1499.4 15.0L1501.5 15.6L1503.6 15.7L1505.7 16.3L1507.7 17.0L1509.8 17.3L1511.9 17.5L1514.0 17.6L1516.2 17.2L1518.3 17.8L1520.4 17.8L1522.4 18.3L1524.5 18.4L1526.6 18.5L1528.6 18.5L1530.7 18.6L1532.7 18.8L1534.8 19.6L1536.8 19.4L1538.9 19.7L1540.9 19.2L1543.0 18.9L1545.1 19.6L1547.2 19.4L1549.2 19.1L1551.3 19.1L1553.4 18.4L1555.5 18.7L1557.6 18.3L1559.7 18.3L1561.8 18.0L1563.8 17.5L1565.9 17.3L1568.1 18.0L1570.1 17.0L1572.3 17.3L1574.4 17.3L1576.5 16.8L1578.5 16.4L1580.6 15.7L1582.7 16.0L1584.9 16.0A4.4 4.4 0 0 1 1586.2 24.0L1586.2 24.0L1584.1 24.6L1581.9 24.9L1579.7 25.1L1577.6 25.4L1575.5 25.7L1573.3 26.0L1571.1 26.1L1569.1 27.1L1566.9 27.1L1564.8 27.4L1562.6 27.4L1560.5 27.3L1558.3 27.7L1556.2 28.2L1554.1 28.6L1551.9 28.3L1549.8 28.5L1547.6 28.4L1545.5 28.6L1543.3 29.1L1541.1 28.6L1538.9 28.9L1536.8 28.4L1534.6 28.6L1532.4 28.9L1530.2 28.7L1528.0 28.7L1525.9 28.1L1523.6 28.8L1521.5 28.3L1519.3 28.3L1517.2 27.5L1515.0 27.6L1512.9 27.7L1510.8 26.6L1508.6 27.2L1506.5 26.7L1504.3 26.7L1502.2 26.4L1500.1 25.6L1498.0 25.3L1495.8 25.7L1493.7 24.7L1491.6 24.5L1489.5 24.1L1487.3 24.0L1485.1 24.2L1483.0 23.5L1480.9 22.8L1478.7 23.3L1476.7 22.5L1474.6 22.1L1472.5 21.8L1470.5 21.4L1468.4 21.4L1466.2 21.8L1464.2 21.4L1462.2 21.1L1460.1 21.0L1458.0 20.9L1456.0 20.8L1453.9 20.9L1451.9 20.8L1449.9 20.5L1447.8 20.4L1445.8 19.9L1443.7 20.2L1441.7 20.8L1439.6 20.4L1437.6 21.1L1435.5 21.1L1433.4 20.7L1431.3 20.8L1429.3 21.4L1427.2 21.3L1425.1 21.2L1422.9 21.3L1420.9 22.2L1418.8 22.6L1416.7 22.3L1414.6 22.6L1412.4 22.3L1410.4 23.3L1408.2 23.1L1406.1 23.4L1404.0 23.9L1401.8 23.7L1399.6 23.5L1397.5 24.4A4.9 4.9 0 0 1 1396.5 14.5Z" fill="#8e8e8e"/><path d="M1396.5 14.5L1398.5 13.6L1400.7 14.0L1402.7 13.0L1404.9 13.1L1407.0 12.7L1409.1 12.2L1411.2 12.1L1413.3 12.1L1415.5 11.9L1417.6 11.7L1419.7 10.8L1421.8 10.9L1424.0 10.9L1426.1 10.0L1428.3 10.3L1430.4 10.0L1432.6 10.0L1434.8 9.5L1436.9 9.4L1439.1 9.2L1441.3 9.5L1443.5 9.4L1445.7 9.4L1447.8 9.3L1450.0 9.5L1452.2 9.5L1454.4 8.8L1456.6 8.9L1458.8 9.9L1460.9 10.2L1463.1 10.2L1465.3 9.9L1467.5 10.1L1469.6 11.1L1471.9 10.9L1473.9 11.7L1476.2 11.6L1478.3 11.8L1480.5 11.8L1482.5 12.9L1484.7 12.7L1486.8 13.0L1489.0 13.3L1490.9 14.5L1493.1 14.4L1495.2 14.2L1497.2 15.1L1499.4 15.0L1501.5 15.6L1503.6 15.7L1505.7 16.3L1507.7 17.0L1509.8 17.3L1511.9 17.5L1514.0 17.6L1516.2 17.2L1518.3 17.8L1520.4 17.8L1522.4 18.3L1524.5 18.4L1526.6 18.5L1528.6 18.5L1530.7 18.6L1532.7 18.8L1534.8 19.6L1536.8 19.4L1538.9 19.7L1540.9 19.2L1543.0 18.9L1545.1 19.6L1547.2 19.4L1549.2 19.1L1551.3 19.1L1553.4 18.4L1555.5 18.7L1557.6 18.3L1559.7 18.3L1561.8 18.0L1563.8 17.5L1565.9 17.3L1568.1 18.0L1570.1 17.0L1572.3 17.3L1574.4 17.3L1576.5 16.8L1578.5 16.4L1580.6 15.7L1582.7 16.0L1584.9 16.0A4.4 4.4 0 0 1 1586.2 24.0L1586.2 24.0L1584.1 24.6L1581.9 24.9L1579.7 25.1L1577.6 25.4L1575.5 25.7L1573.3 26.0L1571.1 26.1L1569.1 27.1L1566.9 27.1L1564.8 27.4L1562.6 27.4L1560.5 27.3L1558.3 27.7L1556.2 28.2L1554.1 28.6L1551.9 28.3L1549.8 28.5L1547.6 28.4L1545.5 28.6L1543.3 29.1L1541.1 28.6L1538.9 28.9L1536.8 28.4L1534.6 28.6L1532.4 28.9L1530.2 28.7L1528.0 28.7L1525.9 28.1L1523.6 28.8L1521.5 28.3L1519.3 28.3L1517.2 27.5L1515.0 27.6L1512.9 27.7L1510.8 26.6L1508.6 27.2L1506.5 26.7L1504.3 26.7L1502.2 26.4L1500.1 25.6L1498.0 25.3L1495.8 25.7L1493.7 24.7L1491.6 24.5L1489.5 24.1L1487.3 24.0L1485.1 24.2L1483.0 23.5L1480.9 22.8L1478.7 23.3L1476.7 22.5L1474.6 22.1L1472.5 21.8L1470.5 21.4L1468.4 21.4L1466.2 21.8L1464.2 21.4L1462.2 21.1L1460.1 21.0L1458.0 20.9L1456.0 20.8L1453.9 20.9L1451.9 20.8L1449.9 20.5L1447.8 20.4L1445.8 19.9L1443.7 20.2L1441.7 20.8L1439.6 20.4L1437.6 21.1L1435.5 21.1L1433.4 20.7L1431.3 20.8L1429.3 21.4L1427.2 21.3L1425.1 21.2L1422.9 21.3L1420.9 22.2L1418.8 22.6L1416.7 22.3L1414.6 22.6L1412.4 22.3L1410.4 23.3L1408.2 23.1L1406.1 23.4L1404.0 23.9L1401.8 23.7L1399.6 23.5L1397.5 24.4A4.9 4.9 0 0 1 1396.5 14.5Z" fill="#f4f4f4" filter="url(#grainA)"/></svg>
<div class="t" style="left:1374.2px;top:687.25px;font-size:8.8px;color:#fff;-webkit-text-stroke:0.4px #fff">64</div>
<div class="t" style="left:1408.8px;top:709.12px;font-size:8.6px;color:#fff;-webkit-text-stroke:0.45px #fff">Charcoal Smooth</div>
<svg style="left:1364px;top:724.3px" width="234" height="16.6" viewBox="1364 0 234 16.6"><path d="M1394 16.8 Q1420 10.2 1450 9.2 Q1478 9.8 1502 16.8 Z" fill="#f2f2f2" filter="url(#grainC)"/><path d="M1404 16.8 Q1428 12.6 1450 12 Q1472 12.4 1490 16.8 Z" fill="#f0f0f0"/><path d="M1404 16.8 Q1428 12.6 1450 12 Q1472 12.4 1490 16.8 Z" fill="#444" opacity=".5" filter="url(#grainB)"/><path d="M1576 16.8 Q1584 14.8 1591 16.8 Z" fill="#ddd"/></svg>
<div class="abs" style="left:1364px;top:740.9px;width:236px;height:2.4px;background:#141414"></div>
<div class="abs" style="left:1364px;top:743.2px;width:236px;height:24.6px;background:#212121;border-radius:0px;"></div>
<div class="abs" style="left:1371.2px;top:747.4px;width:3.4px;height:15px;background:#565656;border-radius:1.7px;"></div>
<div class="abs" style="left:1380.2px;top:746.6px;width:54.6px;height:16.6px;background:#4b4b4b;border-radius:4.5px;"></div>
<div class="t" style="left:1386.2px;top:750.06px;font-size:9.5px;color:#fff;-webkit-text-stroke:0.45px #fff;">Transform</div>
<div class="t" style="left:1440.6px;top:750.06px;font-size:9.5px;color:#e2e2e2;-webkit-text-stroke:0.1px #e2e2e2;">Navigator</div>
<div class="t" style="left:1492.6px;top:750.06px;font-size:9.5px;color:#e2e2e2;-webkit-text-stroke:0.1px #e2e2e2;">History</div>
<div class="abs" style="left:1577.6px;top:748.2px;width:14.2px;height:13.4px;background:#181818;border-radius:3.2px;border:1px solid #8a8a8a"></div>
<svg style="left:1580.4px;top:751.7px" width="9" height="7" viewBox="0 0 9 7" fill="none"><path d="M1 .8 L4.4 5.6 L7.8 .8" stroke="#fff" stroke-width="1.5"/></svg>
<div class="abs" style="left:1382.4px;top:793px;width:29.2px;height:29.6px;background:#6c6c6c;border-radius:0px;"></div>
<div class="abs" style="left:1379.7px;top:790.3px;width:5.4px;height:5.4px;background:#9a9a9a;border-radius:0px;"></div>
<div class="abs" style="left:1379.7px;top:805.0999999999999px;width:5.4px;height:5.4px;background:#9a9a9a;border-radius:0px;"></div>
<div class="abs" style="left:1379.7px;top:819.8px;width:5.4px;height:5.4px;background:#9a9a9a;border-radius:0px;"></div>
<div class="abs" style="left:1394.2px;top:790.3px;width:5.4px;height:5.4px;background:#9a9a9a;border-radius:0px;"></div>
<div class="abs" style="left:1394.2px;top:805.0999999999999px;width:5.4px;height:5.4px;background:#9a9a9a;border-radius:0px;"></div>
<div class="abs" style="left:1394.2px;top:819.8px;width:5.4px;height:5.4px;background:#9a9a9a;border-radius:0px;"></div>
<div class="abs" style="left:1408.7px;top:790.3px;width:5.4px;height:5.4px;background:#9a9a9a;border-radius:0px;"></div>
<div class="abs" style="left:1408.7px;top:805.0999999999999px;width:5.4px;height:5.4px;background:#9a9a9a;border-radius:0px;"></div>
<div class="abs" style="left:1408.7px;top:819.8px;width:5.4px;height:5.4px;background:#9a9a9a;border-radius:0px;"></div>
<div class="abs" style="left:1377.8px;top:788.8px;width:9.2px;height:8.4px;background:#fff;border-radius:0px;"></div>
<div class="abs" style="left:1448.2px;top:780.2px;width:52px;height:16.2px;background:#1f1f1f;border-radius:3.5px;"></div>
<div class="t" style="left:1434.8px;top:782.87px;font-size:9.6px;color:#f4f4f4;-webkit-text-stroke:0.3px #f4f4f4;">X:</div>
<div class="t" style="left:1450.4px;top:782.87px;font-size:9.6px;color:#fff;-webkit-text-stroke:0.3px #fff;">0 mm</div>
<div class="abs" style="left:1448.2px;top:799.8px;width:52px;height:16.2px;background:#1f1f1f;border-radius:3.5px;"></div>
<div class="t" style="left:1435.6px;top:802.47px;font-size:9.6px;color:#f4f4f4;-webkit-text-stroke:0.3px #f4f4f4;">Y:</div>
<div class="t" style="left:1450.4px;top:802.47px;font-size:9.6px;color:#fff;-webkit-text-stroke:0.3px #fff;">0 mm</div>
<div class="abs" style="left:1448.2px;top:823px;width:52px;height:16.4px;background:#1f1f1f;border-radius:3.5px;"></div>
<div class="t" style="left:1434.8px;top:825.67px;font-size:9.6px;color:#f4f4f4;-webkit-text-stroke:0.3px #f4f4f4;">R:</div>
<div class="t" style="left:1450.4px;top:825.67px;font-size:9.6px;color:#fff;-webkit-text-stroke:0.3px #fff;">0 °</div>
<div class="abs" style="left:1489.4px;top:823px;width:1px;height:16.4px;background:#3d3d3d;border-radius:0px;"></div>
<svg style="left:1491.6000000000001px;top:829.2px" width="7" height="5" viewBox="0 0 7 5" fill="none"><path d="M.8 .8 L3.5 3.8 L6.2 .8" stroke="#f0f0f0" stroke-width="1.4"/></svg>
<div class="abs" style="left:1526.4px;top:780.2px;width:52.2px;height:16.2px;background:#1f1f1f;border-radius:3.5px;"></div>
<div class="t" style="left:1511.4px;top:782.87px;font-size:9.6px;color:#f4f4f4;-webkit-text-stroke:0.3px #f4f4f4;">W:</div>
<div class="t" style="left:1528.6000000000001px;top:782.87px;font-size:9.6px;color:#fff;-webkit-text-stroke:0.3px #fff;">210 mm</div>
<div class="abs" style="left:1526.4px;top:799.8px;width:52.2px;height:16.2px;background:#1f1f1f;border-radius:3.5px;"></div>
<div class="t" style="left:1513px;top:802.47px;font-size:9.6px;color:#f4f4f4;-webkit-text-stroke:0.3px #f4f4f4;">H:</div>
<div class="t" style="left:1528.6000000000001px;top:802.47px;font-size:9.6px;color:#fff;-webkit-text-stroke:0.3px #fff;">297 mm</div>
<div class="abs" style="left:1526.4px;top:823px;width:52.2px;height:16.4px;background:#1f1f1f;border-radius:3.5px;"></div>
<div class="t" style="left:1513.4px;top:825.67px;font-size:9.6px;color:#f4f4f4;-webkit-text-stroke:0.3px #f4f4f4;">S:</div>
<div class="t" style="left:1528.6000000000001px;top:825.67px;font-size:9.6px;color:#fff;-webkit-text-stroke:0.3px #fff;">0 °</div>
<div class="abs" style="left:1567.8000000000002px;top:823px;width:1px;height:16.4px;background:#3d3d3d;border-radius:0px;"></div>
<svg style="left:1570.0000000000002px;top:829.2px" width="7" height="5" viewBox="0 0 7 5" fill="none"><path d="M.8 .8 L3.5 3.8 L6.2 .8" stroke="#f0f0f0" stroke-width="1.4"/></svg>
<svg style="left:1584.5px;top:789px" width="8" height="19" viewBox="0 0 8 19" fill="none"><g stroke="#8c8c8c" stroke-width="1"><path d="M1 7 V2.4 Q1 .8 2.6 .8 H5 Q6.6 .8 6.6 2.4 V7"/><path d="M1 11 V15.6 Q1 17.2 2.6 17.2 H5 Q6.6 17.2 6.6 15.6 V11"/><path d="M0 9 H2 M3 9 H4.8 M5.8 9 H7.8" stroke="#777"/></g></svg>
<svg style="left:1549px;top:846.5px" width="15" height="14" viewBox="0 0 15 14" fill="none"><rect x="1.2" y="1.2" width="12.4" height="11.6" rx="1.2" stroke="#d8d8d8" stroke-width="1.1" stroke-dasharray="3 1.6"/><rect x="0.4" y="6" width="8.2" height="7.4" rx="1.4" fill="#424242"/><rect x="1.2" y="7" width="6.4" height="5.6" rx="1.2" fill="#eee"/></svg>
<svg style="left:1571.6px;top:851.4px" width="7" height="5" viewBox="0 0 7 5" fill="none"><path d="M.8 .8 L3.5 3.8 L6.2 .8" stroke="#d8d8d8" stroke-width="1.4"/></svg>
<!--/RIGHT-->
<!--STATUS-->
<div class="abs" style="left:40px;top:876.5px;width:88.5px;height:14.5px;border-radius:4px 4px 0 0;background:#1f1f1f"></div>
<svg style="left:10px;top:878.5px" width="30" height="11" viewBox="0 0 30 11" fill="#686868"><rect x="1.2" y="1" width="1.2" height="9"/><path d="M10.4 1 V10 L3 5.5 Z"/><path d="M24.6 1.4 V9.8 L17.4 5.6 Z"/></svg>
<div class="t" style="left:73.5px;top:877.8px;font-size:9.5px;color:#fff;-webkit-text-stroke:.15px #fff">1 of 1</div>
<svg style="left:130px;top:878px" width="28" height="12" viewBox="0 0 28 12"><path d="M1 1.2 V10.2 L8.4 5.7 Z" fill="#d0d0d0"/><path d="M16.2 1.4 V10 L23.4 5.7 Z" fill="#646464"/><rect x="24" y="1.4" width="1.3" height="8.6" fill="#646464"/></svg>
<svg style="left:162px;top:877px" width="70" height="14" viewBox="0 0 70 14" fill="none"><g stroke="#646464" stroke-width="1"><path d="M2 1.4 H10 V10.6 H2 Z M3.8 12.4 H11.8 V3.4 M3.6 3.8 H8.4 M3.6 6 H8.4 M3.6 8.2 H8.4"/></g><g stroke="#545454" stroke-width="1.1"><path d="M19 5 H25.6 Q28.4 5.4 28.2 7.4 Q27.8 9.2 25.6 9.2 M20.8 3.4 L18.6 5.2 L20.8 7"/><ellipse cx="22.8" cy="8.6" rx="2.6" ry="1.5"/></g><g stroke="#dcdcdc" stroke-width="1.2"><rect x="35.8" y="1.2" width="8" height="9.6" rx="1.4" fill="#3a3a3a"/><path d="M39 12.6 H45.8 V4.4"/><path d="M37 2.4 H42.6" stroke="#8a8a8a" stroke-width="1.4"/></g><g stroke="#a6a6a6" stroke-width="1"><path d="M53.8 1.4 H61.8 V10.8 H53.8 Z M55.6 12.6 H63.6 V3.4"/><path d="M55.4 3.8 H60.2 M55.4 6.2 H60.2 M55.4 8.6 H60.2" stroke-width="1.4"/></g></svg>
<div class="t" style="left:249.5px;top:880.2px;font-size:9.5px;color:#dedede;letter-spacing:.13px">'Artboard1' selected. <b style="color:#fff">Drag</b> to move selection. <b style="color:#fff">Click</b> another object to select it. <b style="color:#fff">Click</b> on an empty area to deselect selection. <span style="color:#fff;font-weight:bold">&#8629;</span> to enter move/duplicate values.</div>
<div class="t" style="left:1369.6px;top:880px;font-size:9.85px;color:#f4f4f4;-webkit-text-stroke:.2px #f4f4f4">&lt;Untitled&gt; (35.3%)</div>
<!--/STATUS-->
</div></body></html>
